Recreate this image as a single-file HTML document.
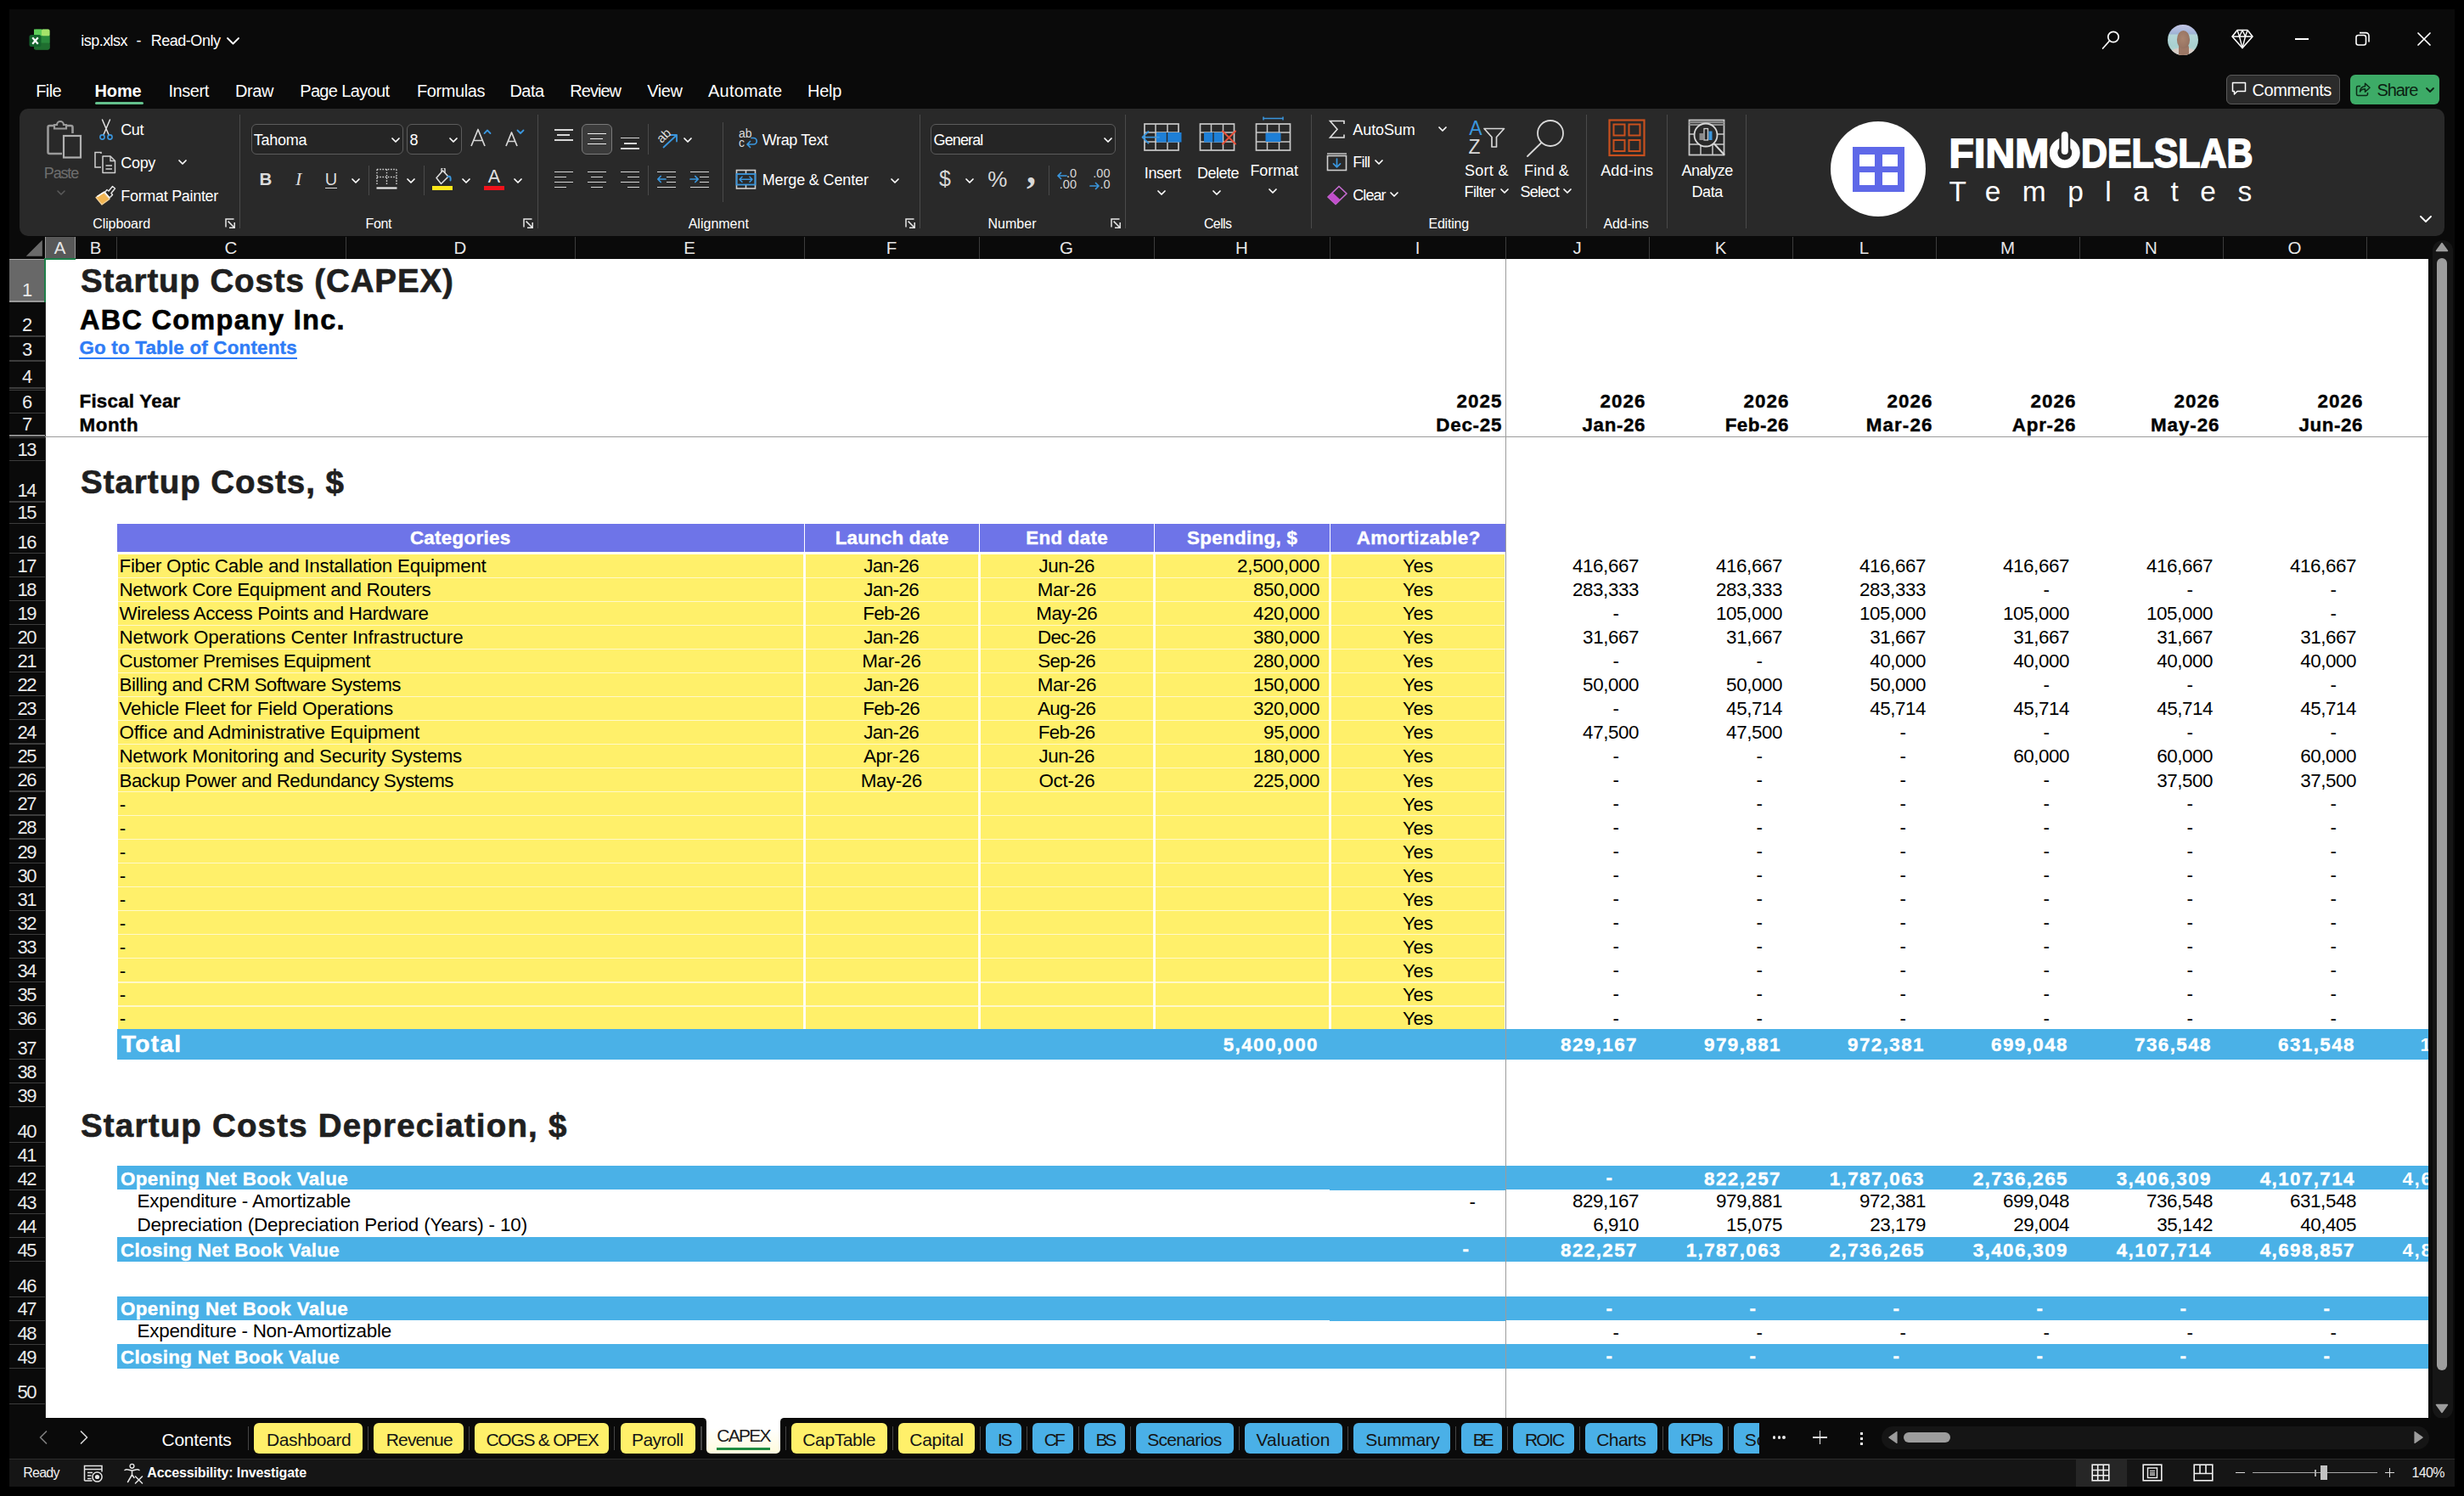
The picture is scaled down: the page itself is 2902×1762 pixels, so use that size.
<!DOCTYPE html>
<html lang="en"><head><meta charset="utf-8"><title>isp.xlsx - Excel</title>
<style>
html,body{margin:0;padding:0;background:#000;}
body{width:2902px;height:1762px;position:relative;overflow:hidden;font-family:'Liberation Sans',sans-serif;}
#app div,#app svg{position:absolute;}
#app .t{line-height:1;white-space:pre;}
#app{position:absolute;left:0;top:0;width:2902px;height:1762px;overflow:hidden;}
</style></head>
<body><div id="app">
<div style="left:11px;top:11px;width:2880px;height:1740px;background:#0a0a0a;"></div>
<svg style="left:34px;top:34px;" width="25" height="26" viewBox="0 0 25 26" fill="none">
<rect x="6" y="0.5" width="18.5" height="24" rx="2.5" fill="#2a8a3c"/>
<rect x="6" y="0.5" width="9" height="8" fill="#5fce5a"/>
<rect x="15" y="0.5" width="9.5" height="8" rx="1.5" fill="#a6e36a"/>
<rect x="6" y="8.5" width="18.5" height="8" fill="#2a8a3c"/>
<rect x="6" y="16.5" width="18.5" height="8" rx="2" fill="#1f6e2f"/>
<rect x="0.5" y="7" width="14" height="14" rx="2.5" fill="#14632c"/>
<path d="M4.2 10.2 L10.8 17.8 M10.8 10.2 L4.2 17.8" stroke="#fff" stroke-width="2.2"/>
</svg>
<div class="t" style="top:38.76px;font-size:18px;color:#fff;letter-spacing:-0.539px;left:95.3px;"><span id="t1">isp.xlsx</span></div>
<div class="t" style="top:38.76px;font-size:18px;color:#fff;left:160.5px;"><span id="t2">-</span></div>
<div class="t" style="top:38.76px;font-size:18px;color:#fff;letter-spacing:-0.472px;left:177.7px;"><span id="t3">Read-Only</span></div>
<svg style="left:265.5px;top:42.75px;" width="17" height="10.5" viewBox="0 0 17 10.5" fill="none"><path d="M2 2 L8.5 8.5 L15 2" stroke="#fff" stroke-width="1.8" stroke-linecap="round" stroke-linejoin="round"/></svg>
<div class="t" style="top:96.77px;font-size:20px;color:#fff;letter-spacing:-0.609px;left:42.2px;"><span id="t4">File</span></div>
<div class="t" style="top:96.77px;font-size:20px;color:#fff;font-weight:700;letter-spacing:-0.120px;left:111.5px;"><span id="t5">Home</span></div>
<div class="t" style="top:96.77px;font-size:20px;color:#fff;letter-spacing:-0.422px;left:198.4px;"><span id="t6">Insert</span></div>
<div class="t" style="top:96.77px;font-size:20px;color:#fff;letter-spacing:-0.418px;left:277px;"><span id="t7">Draw</span></div>
<div class="t" style="top:96.77px;font-size:20px;color:#fff;letter-spacing:-0.648px;left:353.2px;"><span id="t8">Page Layout</span></div>
<div class="t" style="top:96.77px;font-size:20px;color:#fff;letter-spacing:-0.420px;left:491px;"><span id="t9">Formulas</span></div>
<div class="t" style="top:96.77px;font-size:20px;color:#fff;letter-spacing:-0.537px;left:600.4px;"><span id="t10">Data</span></div>
<div class="t" style="top:96.77px;font-size:20px;color:#fff;letter-spacing:-0.980px;left:671.3px;"><span id="t11">Review</span></div>
<div class="t" style="top:96.77px;font-size:20px;color:#fff;letter-spacing:-0.450px;left:762.2px;"><span id="t12">View</span></div>
<div class="t" style="top:96.77px;font-size:20px;color:#fff;letter-spacing:0.211px;left:834px;"><span id="t13">Automate</span></div>
<div class="t" style="top:96.77px;font-size:20px;color:#fff;letter-spacing:-0.285px;left:951px;"><span id="t14">Help</span></div>
<div style="left:111.5px;top:119.5px;width:57.5px;height:3.5px;background:#63c08c;border-radius:2px;"></div>
<svg style="left:2472px;top:30px;" width="32" height="32" viewBox="0 0 32 32" fill="none"><circle cx="17" cy="13.5" r="6.2" stroke="#fff" stroke-width="1.7"/><path d="M12.6 18 L4.6 27" stroke="#fff" stroke-width="1.7" stroke-linecap="round"/></svg>
<div style="left:2552.9px;top:28.6px;width:36.3px;height:36.4px;border-radius:50%;overflow:hidden;background:linear-gradient(#c3c6e4 0%,#a9b8db 22%,#9fb4d4 30%,#b4d6d8 34%,#a8d0cf 70%,#c4d6d2 100%);"><div style="left:3px;top:27px;width:31px;height:14px;border-radius:50% 50% 0 0;background:#d6ccc6;"></div><div style="left:13.5px;top:24px;width:12px;height:14px;background:#9c7765;border-radius:3px;"></div><div style="left:10.8px;top:7px;width:15.6px;height:21.5px;border-radius:50% 50% 46% 46%;background:radial-gradient(ellipse at 45% 45%,#a9846f 0%,#9a7664 60%,#85655a 100%);"></div></div>
<svg style="left:2627px;top:33px;" width="28" height="26" viewBox="0 0 28 26" fill="none"><path d="M8 2.5 H20 L26 10 L14 23.5 L2 10 Z" stroke="#fff" stroke-width="1.6" stroke-linejoin="round"/><path d="M2 10 H26 M8 2.5 L10.5 10 L14 23.5 L17.5 10 L20 2.5 M10.5 10 L14 2.5 L17.5 10" stroke="#fff" stroke-width="1.4" stroke-linejoin="round"/></svg>
<div style="left:2703px;top:45px;width:16px;height:1.6px;background:#fff;"></div>
<svg style="left:2773px;top:36px;" width="20" height="20" viewBox="0 0 20 20" fill="none"><rect x="2" y="5.5" width="11.5" height="11.5" rx="2.5" stroke="#fff" stroke-width="1.6"/><path d="M6 2.6 H13.5 A3.5 3.5 0 0 1 17 6.1 V13.5" stroke="#fff" stroke-width="1.6"/></svg>
<svg style="left:2846px;top:37px;" width="18" height="18" viewBox="0 0 18 18" fill="none"><path d="M2 2 L16 16 M16 2 L2 16" stroke="#fff" stroke-width="1.7" stroke-linecap="round"/></svg>
<div style="left:2621.5px;top:87.5px;width:134px;height:35px;background:#2b2b2b;border:1px solid #5a5a5a;border-radius:6px;box-sizing:border-box;"></div>
<svg style="left:2628px;top:95px;" width="19" height="20" viewBox="0 0 19 20" fill="none"><path d="M1.5 2.5 H16.5 V12.5 H7 L3.5 16 V12.5 H1.5 Z" stroke="#fff" stroke-width="1.5" stroke-linejoin="round"/></svg>
<div class="t" style="top:95.97px;font-size:20px;color:#fff;letter-spacing:-0.425px;left:2652.6px;"><span id="t15">Comments</span></div>
<div style="left:2768px;top:87.5px;width:105px;height:35px;background:#3dab67;border-radius:6px;"></div>
<svg style="left:2773px;top:95px;" width="20" height="20" viewBox="0 0 20 20" fill="none"><path d="M7 6.5 H4 A1.5 1.5 0 0 0 2.5 8 V16 A1.5 1.5 0 0 0 4 17.5 H14 A1.5 1.5 0 0 0 15.5 16 V14" stroke="#0c2a17" stroke-width="1.5"/><path d="M6.5 13 C7 8.5 9.5 6.8 12.5 6.8 V3.2 L18 8.2 L12.5 13.2 V9.8 C10 9.8 8 10.5 6.5 13 Z" stroke="#0c2a17" stroke-width="1.5" stroke-linejoin="round"/></svg>
<div class="t" style="top:95.97px;font-size:20px;color:#0c1f12;letter-spacing:-1.135px;left:2799.6px;"><span id="t16">Share</span></div>
<svg style="left:2856px;top:102px;" width="12" height="8" viewBox="0 0 12 8" fill="none"><path d="M2 2 L6 6 L10 2" stroke="#0c1f12" stroke-width="1.8" stroke-linecap="round" stroke-linejoin="round"/></svg>
<div style="left:23px;top:128px;width:2856px;height:150px;background:#292929;border-radius:10px;"></div>
<svg style="left:54px;top:140px;" width="44" height="48" viewBox="0 0 44 48" fill="none">
<path d="M9 8 H4.5 A2 2 0 0 0 2.5 10 V39 A2 2 0 0 0 4.5 41 H19" stroke="#9a9a9a" stroke-width="2.6"/>
<path d="M24 8 H29.5 A2 2 0 0 1 31.5 10 V17" stroke="#9a9a9a" stroke-width="2.6"/>
<path d="M10 11.5 V7 H13 A4 4 0 0 1 21 7 H24 V11.5 Z" stroke="#9a9a9a" stroke-width="2.2" fill="#292929"/>
<rect x="21" y="20" width="20" height="25.5" stroke="#b0b0b0" stroke-width="2.2" fill="#292929"/>
</svg>
<div class="t" style="top:194.76px;font-size:18px;color:#6e6e6e;letter-spacing:-1.166px;left:51.8px;"><span id="t17">Paste</span></div>
<svg style="left:65.5px;top:222.5px;" width="12" height="8" viewBox="0 0 12 8" fill="none"><path d="M2 2 L6 6 L10 2" stroke="#5a5a5a" stroke-width="1.6" stroke-linecap="round" stroke-linejoin="round"/></svg>
<svg style="left:114px;top:139px;" width="22" height="28" viewBox="0 0 22 28" fill="none"><path d="M6.5 2 L14.2 20 M15.5 2 L7.8 20" stroke="#e0e0e0" stroke-width="1.5" stroke-linecap="round"/>
<circle cx="6.5" cy="22.5" r="2.6" stroke="#3a96dd" stroke-width="1.6"/><circle cx="15.5" cy="22.5" r="2.6" stroke="#3a96dd" stroke-width="1.6"/></svg>
<div class="t" style="top:143.76px;font-size:18px;color:#ffffff;letter-spacing:-0.439px;left:142.3px;"><span id="t18">Cut</span></div>
<svg style="left:110px;top:178px;" width="28" height="28" viewBox="0 0 28 28" fill="none"><path d="M9 3 V1.5 H2 V19 H9" stroke="#d0d0d0" stroke-width="1.5"/>
<path d="M11 6 H20 L25.5 11.5 V25.5 H11 Z" stroke="#d0d0d0" stroke-width="1.5" stroke-linejoin="round"/>
<path d="M20 6 V11.5 H25.5 M14.5 17 H22 M14.5 21 H22" stroke="#d0d0d0" stroke-width="1.4"/></svg>
<div class="t" style="top:182.56px;font-size:18px;color:#ffffff;letter-spacing:-0.333px;left:142.3px;"><span id="t19">Copy</span></div>
<svg style="left:209px;top:187px;" width="12" height="8" viewBox="0 0 12 8" fill="none"><path d="M2 2 L6 6 L10 2" stroke="#ffffff" stroke-width="1.7" stroke-linecap="round" stroke-linejoin="round"/></svg>
<svg style="left:111px;top:217px;" width="26" height="26" viewBox="0 0 26 26" fill="none"><path d="M2 15.5 L11 9.5 L18 17.5 L9 24 Z" fill="#f2b552" stroke="#f2d29b" stroke-width="1.2" stroke-linejoin="round"/>
<path d="M3.5 14.5 L12 9 L18.5 16.5" stroke="#fff" stroke-width="1.5" fill="none"/>
<path d="M12.5 9.5 L15 6.5 L17 8 L21.5 2.5 L24.5 5 L20 10.5 L21.5 12.5 L18.5 15.5" stroke="#e6e6e6" stroke-width="1.5" stroke-linejoin="round"/></svg>
<div class="t" style="top:221.56px;font-size:18px;color:#ffffff;letter-spacing:-0.310px;left:142.3px;"><span id="t20">Format Painter</span></div>
<div class="t" style="top:255.86px;font-size:16px;color:#ffffff;letter-spacing:-0.076px;left:109.2px;"><span id="t21">Clipboard</span></div>
<svg style="left:265px;top:257px;" width="13" height="13" viewBox="0 0 13 13" fill="none"><path d="M1 10.5 V1 H10.5 M3.6 3.6 L11 11 M11.2 5 V11.2 H5" stroke="#e6e6e6" stroke-width="1.5"/></svg>
<div style="left:281.8px;top:135px;width:1.3px;height:134px;background:#4a4a4a;"></div>
<div style="left:295.5px;top:146.3px;width:179.9px;height:35.5px;background:#252525;border:1px solid #5c5c5c;border-radius:6px;box-sizing:border-box;"></div>
<div class="t" style="top:155.56px;font-size:18px;color:#ffffff;letter-spacing:-0.258px;left:298.8px;"><span id="t22">Tahoma</span></div>
<svg style="left:459.9px;top:161px;" width="12" height="8" viewBox="0 0 12 8" fill="none"><path d="M2 2 L6 6 L10 2" stroke="#ffffff" stroke-width="1.7" stroke-linecap="round" stroke-linejoin="round"/></svg>
<div style="left:479.3px;top:146.3px;width:64.5px;height:35.5px;background:#252525;border:1px solid #5c5c5c;border-radius:6px;box-sizing:border-box;"></div>
<div class="t" style="top:155.56px;font-size:18px;color:#ffffff;left:482.6px;"><span id="t23">8</span></div>
<svg style="left:528.3px;top:161px;" width="12" height="8" viewBox="0 0 12 8" fill="none"><path d="M2 2 L6 6 L10 2" stroke="#ffffff" stroke-width="1.7" stroke-linecap="round" stroke-linejoin="round"/></svg>
<svg style="left:552px;top:148px;" width="28" height="28" viewBox="0 0 28 28" fill="none"><path d="M3 24 L11 4.5 L19 24 M5.8 17.5 H16.2" stroke="#d8d8d8" stroke-width="1.7" stroke-linejoin="round"/><path d="M18.5 9 L22 5.5 L25.5 9" stroke="#3a96dd" stroke-width="1.8" stroke-linecap="round" stroke-linejoin="round"/></svg>
<svg style="left:593px;top:148px;" width="28" height="28" viewBox="0 0 28 28" fill="none"><path d="M3 24 L9.5 8 L16 24 M5.2 18.5 H13.8" stroke="#d8d8d8" stroke-width="1.7" stroke-linejoin="round"/><path d="M16.5 5.5 L20 9 L23.5 5.5" stroke="#3a96dd" stroke-width="1.8" stroke-linecap="round" stroke-linejoin="round"/></svg>
<div class="t" style="top:200.65px;font-size:20.5px;color:#dcdcdc;font-weight:700;left:-287px;width:1200px;text-align:center;"><span id="t24">B</span></div>
<div class="t" style="top:199.88px;font-size:22px;color:#dcdcdc;left:-248.4px;width:1200px;text-align:center;font-style:italic;font-family:'Liberation Serif',serif;"><span id="t25">I</span></div>
<div class="t" style="top:200.57px;font-size:20px;color:#dcdcdc;left:-210px;width:1200px;text-align:center;"><span id="t26">U</span></div>
<div style="left:383px;top:220.5px;width:14px;height:1.5px;background:#dcdcdc;"></div>
<svg style="left:412.9px;top:208.5px;" width="12" height="8" viewBox="0 0 12 8" fill="none"><path d="M2 2 L6 6 L10 2" stroke="#ffffff" stroke-width="1.7" stroke-linecap="round" stroke-linejoin="round"/></svg>
<div style="left:434.1px;top:194.5px;width:1.3px;height:35.1px;background:#4a4a4a;"></div>
<svg style="left:443px;top:198px;" width="25" height="26" viewBox="0 0 25 26" fill="none"><path d="M1 1.5 H24 M1 1.5 V19.5 M24 1.5 V19.5 M12.5 1.5 V19.5 M1 10.5 H24" stroke="#d0d0d0" stroke-width="1.4" stroke-dasharray="1.6 1.6"/>
<path d="M0.5 23.5 H24.5" stroke="#e8e8e8" stroke-width="2.2"/></svg>
<svg style="left:478px;top:208.5px;" width="12" height="8" viewBox="0 0 12 8" fill="none"><path d="M2 2 L6 6 L10 2" stroke="#ffffff" stroke-width="1.7" stroke-linecap="round" stroke-linejoin="round"/></svg>
<div style="left:499px;top:194.5px;width:1.3px;height:35.1px;background:#4a4a4a;"></div>
<svg style="left:508px;top:198px;" width="26" height="26" viewBox="0 0 26 26" fill="none"><path d="M6 11.5 L13.5 3 L20 10 L11.5 18.5 Z" stroke="#e0e0e0" stroke-width="1.5" stroke-linejoin="round"/>
<path d="M12 4.5 V1.5 A2 2 0 0 1 16 1.5 V6" stroke="#e0e0e0" stroke-width="1.4"/>
<path d="M19.5 10 C22.5 8.5 23 12 22.5 14.5" stroke="#3a96dd" stroke-width="2" stroke-linecap="round"/></svg>
<div style="left:508.7px;top:218.6px;width:24px;height:5.2px;background:#ffe81a;"></div>
<svg style="left:542.8px;top:208.5px;" width="12" height="8" viewBox="0 0 12 8" fill="none"><path d="M2 2 L6 6 L10 2" stroke="#ffffff" stroke-width="1.7" stroke-linecap="round" stroke-linejoin="round"/></svg>
<div class="t" style="top:198.30px;font-size:21.5px;color:#e0e0e0;left:-18px;width:1200px;text-align:center;"><span id="t27">A</span></div>
<div style="left:570px;top:218.6px;width:24px;height:5.2px;background:#f1121b;"></div>
<svg style="left:604px;top:208.5px;" width="12" height="8" viewBox="0 0 12 8" fill="none"><path d="M2 2 L6 6 L10 2" stroke="#ffffff" stroke-width="1.7" stroke-linecap="round" stroke-linejoin="round"/></svg>
<div class="t" style="top:255.86px;font-size:16px;color:#ffffff;letter-spacing:-0.379px;left:430.5px;"><span id="t28">Font</span></div>
<svg style="left:615.7px;top:257px;" width="13" height="13" viewBox="0 0 13 13" fill="none"><path d="M1 10.5 V1 H10.5 M3.6 3.6 L11 11 M11.2 5 V11.2 H5" stroke="#e6e6e6" stroke-width="1.5"/></svg>
<div style="left:633.1px;top:135px;width:1.3px;height:134px;background:#4a4a4a;"></div>
<div style="left:652.9px;top:152.1px;width:22px;height:1.6px;background:#d6d6d6;"></div>
<div style="left:656.4px;top:158.2px;width:15px;height:1.6px;background:#d6d6d6;"></div>
<div style="left:652.9px;top:164.2px;width:22px;height:1.6px;background:#d6d6d6;"></div>
<div style="left:685px;top:146.3px;width:36px;height:35.5px;background:#3b3b3b;border:1px solid #7a7a7a;border-radius:6px;box-sizing:border-box;"></div>
<div style="left:691.9px;top:156.5px;width:22px;height:1.6px;background:#f0f0f0;"></div>
<div style="left:695.4px;top:162.6px;width:15px;height:1.6px;background:#f0f0f0;"></div>
<div style="left:691.9px;top:168.6px;width:22px;height:1.6px;background:#f0f0f0;"></div>
<div style="left:731px;top:161.9px;width:22px;height:1.6px;background:#d6d6d6;"></div>
<div style="left:734.5px;top:168.2px;width:15px;height:1.6px;background:#d6d6d6;"></div>
<div style="left:731px;top:174.2px;width:22px;height:1.6px;background:#d6d6d6;"></div>
<div style="left:763px;top:146px;width:1.3px;height:36px;background:#4a4a4a;"></div>
<svg style="left:771px;top:149px;" width="30" height="30" viewBox="0 0 30 30" fill="none"><path d="M10.5 24.5 L25.5 10.5 M18.5 10 H26 V17.5" stroke="#3a96dd" stroke-width="1.8" stroke-linecap="round" stroke-linejoin="round"/></svg>
<div class="t" style="left:773px;top:152px;font-size:15px;color:#dcdcdc;transform:rotate(-45deg);transform-origin:50% 50%;">ab</div>
<svg style="left:804px;top:161px;" width="12" height="8" viewBox="0 0 12 8" fill="none"><path d="M2 2 L6 6 L10 2" stroke="#ffffff" stroke-width="1.7" stroke-linecap="round" stroke-linejoin="round"/></svg>
<div style="left:850.7px;top:144px;width:1.3px;height:94px;background:#4a4a4a;"></div>
<div class="t" style="top:149.65px;font-size:14px;color:#dcdcdc;left:870px;"><span id="t29">ab</span></div>
<div class="t" style="top:160.65px;font-size:14px;color:#dcdcdc;left:870px;"><span id="t30">c</span></div>
<svg style="left:877px;top:160px;" width="16" height="16" viewBox="0 0 16 16" fill="none"><path d="M8 2.5 H10.5 A3.5 3.5 0 0 1 10.5 10 H3.5 M6.5 6.5 L3 10 L6.5 13.5" stroke="#3a96dd" stroke-width="1.7" stroke-linecap="round" stroke-linejoin="round"/></svg>
<div class="t" style="top:155.56px;font-size:18px;color:#ffffff;letter-spacing:-0.342px;left:897.7px;"><span id="t31">Wrap Text</span></div>
<div style="left:652.9px;top:201.6px;width:22px;height:1.6px;background:#d6d6d6;"></div>
<div style="left:652.9px;top:207.5px;width:14px;height:1.6px;background:#d6d6d6;"></div>
<div style="left:652.9px;top:213.5px;width:22px;height:1.6px;background:#d6d6d6;"></div>
<div style="left:652.9px;top:219.6px;width:14px;height:1.6px;background:#d6d6d6;"></div>
<div style="left:691.9px;top:201.6px;width:22px;height:1.6px;background:#d6d6d6;"></div>
<div style="left:695.9px;top:207.5px;width:14px;height:1.6px;background:#d6d6d6;"></div>
<div style="left:691.9px;top:213.5px;width:22px;height:1.6px;background:#d6d6d6;"></div>
<div style="left:695.9px;top:219.6px;width:14px;height:1.6px;background:#d6d6d6;"></div>
<div style="left:731px;top:201.6px;width:22px;height:1.6px;background:#d6d6d6;"></div>
<div style="left:739px;top:207.5px;width:14px;height:1.6px;background:#d6d6d6;"></div>
<div style="left:731px;top:213.5px;width:22px;height:1.6px;background:#d6d6d6;"></div>
<div style="left:739px;top:219.6px;width:14px;height:1.6px;background:#d6d6d6;"></div>
<div style="left:763px;top:194.5px;width:1.3px;height:35.1px;background:#4a4a4a;"></div>
<div style="left:774px;top:201.6px;width:22px;height:1.6px;background:#d6d6d6;"></div>
<div style="left:785px;top:207.5px;width:11px;height:1.6px;background:#d6d6d6;"></div>
<div style="left:785px;top:213.5px;width:11px;height:1.6px;background:#d6d6d6;"></div>
<div style="left:774px;top:219.6px;width:22px;height:1.6px;background:#d6d6d6;"></div>
<svg style="left:773px;top:205px;" width="12" height="12" viewBox="0 0 12 12" fill="none"><path d="M11 6 H2 M5.2 2.5 L1.8 6 L5.2 9.5" stroke="#3a96dd" stroke-width="1.7" stroke-linecap="round" stroke-linejoin="round"/></svg>
<div style="left:812.8px;top:201.6px;width:22px;height:1.6px;background:#d6d6d6;"></div>
<div style="left:823.8px;top:207.5px;width:11px;height:1.6px;background:#d6d6d6;"></div>
<div style="left:823.8px;top:213.5px;width:11px;height:1.6px;background:#d6d6d6;"></div>
<div style="left:812.8px;top:219.6px;width:22px;height:1.6px;background:#d6d6d6;"></div>
<svg style="left:812px;top:205px;" width="12" height="12" viewBox="0 0 12 12" fill="none"><path d="M1 6 H10 M6.8 2.5 L10.2 6 L6.8 9.5" stroke="#3a96dd" stroke-width="1.7" stroke-linecap="round" stroke-linejoin="round"/></svg>
<svg style="left:866px;top:199px;" width="26" height="25" viewBox="0 0 26 25" fill="none"><rect x="1.5" y="1.5" width="22" height="21.5" stroke="#cfcfcf" stroke-width="1.6"/>
<path d="M12.5 1.5 V6 M12.5 18.5 V23" stroke="#cfcfcf" stroke-width="1.6"/>
<rect x="1.5" y="6" width="22" height="12.5" stroke="#3a96dd" stroke-width="1.8"/>
<path d="M5 12.2 H20 M8 9.2 L5 12.2 L8 15.2 M17 9.2 L20 12.2 L17 15.2" stroke="#3a96dd" stroke-width="1.6" stroke-linecap="round" stroke-linejoin="round"/></svg>
<div class="t" style="top:203.36px;font-size:18px;color:#ffffff;letter-spacing:-0.140px;left:897.7px;"><span id="t32">Merge &amp; Center</span></div>
<svg style="left:1048.4px;top:208.5px;" width="12" height="8" viewBox="0 0 12 8" fill="none"><path d="M2 2 L6 6 L10 2" stroke="#ffffff" stroke-width="1.7" stroke-linecap="round" stroke-linejoin="round"/></svg>
<div class="t" style="top:255.86px;font-size:16px;color:#ffffff;letter-spacing:0.005px;left:810.7px;"><span id="t33">Alignment</span></div>
<svg style="left:1066px;top:257px;" width="13" height="13" viewBox="0 0 13 13" fill="none"><path d="M1 10.5 V1 H10.5 M3.6 3.6 L11 11 M11.2 5 V11.2 H5" stroke="#e6e6e6" stroke-width="1.5"/></svg>
<div style="left:1082.9px;top:135px;width:1.3px;height:134px;background:#4a4a4a;"></div>
<div style="left:1096.2px;top:146.3px;width:217.6px;height:35.5px;background:#252525;border:1px solid #5c5c5c;border-radius:6px;box-sizing:border-box;"></div>
<div class="t" style="top:155.56px;font-size:18px;color:#ffffff;letter-spacing:-0.864px;left:1099.5px;"><span id="t34">General</span></div>
<svg style="left:1299px;top:161px;" width="12" height="8" viewBox="0 0 12 8" fill="none"><path d="M2 2 L6 6 L10 2" stroke="#ffffff" stroke-width="1.7" stroke-linecap="round" stroke-linejoin="round"/></svg>
<div class="t" style="top:198.34px;font-size:25px;color:#d8d8d8;left:513px;width:1200px;text-align:center;"><span id="t35">$</span></div>
<svg style="left:1136.2px;top:208.5px;" width="12" height="8" viewBox="0 0 12 8" fill="none"><path d="M2 2 L6 6 L10 2" stroke="#ffffff" stroke-width="1.7" stroke-linecap="round" stroke-linejoin="round"/></svg>
<div class="t" style="top:197.99px;font-size:26px;color:#d8d8d8;left:574.8px;width:1200px;text-align:center;"><span id="t36">%</span></div>
<div class="t" style="top:179.75px;font-size:44px;color:#d8d8d8;font-weight:700;left:614.5px;width:1200px;text-align:center;font-family:'Liberation Serif',serif;"><span id="t37">,</span></div>
<div style="left:1234.8px;top:194.5px;width:1.3px;height:35.1px;background:#4a4a4a;"></div>
<div class="t" style="top:197.23px;font-size:14.5px;color:#d8d8d8;left:68px;width:1200px;text-align:right;"><span id="t38">.0</span></div>
<div class="t" style="top:210.23px;font-size:14.5px;color:#d8d8d8;left:68px;width:1200px;text-align:right;"><span id="t39">.00</span></div>
<svg style="left:1244px;top:201px;" width="13" height="12" viewBox="0 0 13 12" fill="none"><path d="M12 6 H2 M5.5 2.5 L2 6 L5.5 9.5" stroke="#3a96dd" stroke-width="1.7" stroke-linecap="round" stroke-linejoin="round"/></svg>
<div class="t" style="top:197.23px;font-size:14.5px;color:#d8d8d8;left:107.5px;width:1200px;text-align:right;"><span id="t40">.00</span></div>
<div class="t" style="top:210.23px;font-size:14.5px;color:#d8d8d8;left:107.5px;width:1200px;text-align:right;"><span id="t41">.0</span></div>
<svg style="left:1283px;top:213px;" width="13" height="12" viewBox="0 0 13 12" fill="none"><path d="M1 6 H11 M7.5 2.5 L11 6 L7.5 9.5" stroke="#3a96dd" stroke-width="1.7" stroke-linecap="round" stroke-linejoin="round"/></svg>
<div class="t" style="top:255.86px;font-size:16px;color:#ffffff;letter-spacing:0.049px;left:1163.4px;"><span id="t42">Number</span></div>
<svg style="left:1308px;top:257px;" width="13" height="13" viewBox="0 0 13 13" fill="none"><path d="M1 10.5 V1 H10.5 M3.6 3.6 L11 11 M11.2 5 V11.2 H5" stroke="#e6e6e6" stroke-width="1.5"/></svg>
<div style="left:1325.1px;top:135px;width:1.3px;height:134px;background:#4a4a4a;"></div>
<svg style="left:1343px;top:145px;" width="52" height="35" viewBox="0 0 52 35" fill="none"><g transform="translate(4 0)"><rect x="1" y="1" width="40" height="31" stroke="#c8c8c8" stroke-width="1.7"/><path d="M14.0 1 V32 M28.0 1 V32 M1 11.0 H41 M1 22.0 H41" stroke="#c8c8c8" stroke-width="1.5"/></g><rect x="19" y="11" width="29.5" height="11.5" fill="#1e7fd6"/><path d="M31.5 11 V22.5" stroke="#292929" stroke-width="1.4"/><path d="M22 16.7 H3 M9.5 10 L2.5 16.7 L9.5 23.5" stroke="#3a96dd" stroke-width="1.8" stroke-linecap="round" stroke-linejoin="round"/></svg>
<div class="t" style="top:194.66px;font-size:18px;color:#ffffff;letter-spacing:-0.289px;left:1347.7px;"><span id="t43">Insert</span></div>
<svg style="left:1362.4px;top:222.7px;" width="12" height="8" viewBox="0 0 12 8" fill="none"><path d="M2 2 L6 6 L10 2" stroke="#ffffff" stroke-width="1.7" stroke-linecap="round" stroke-linejoin="round"/></svg>
<svg style="left:1411px;top:145px;" width="50" height="35" viewBox="0 0 50 35" fill="none"><g transform="translate(1.5 0)"><rect x="1" y="1" width="40" height="31" stroke="#c8c8c8" stroke-width="1.7"/><path d="M14.0 1 V32 M28.0 1 V32 M1 11.0 H41 M1 22.0 H41" stroke="#c8c8c8" stroke-width="1.5"/></g><rect x="7" y="11" width="22" height="11.5" fill="#1e7fd6"/><path d="M18 11 V22.5" stroke="#292929" stroke-width="1.4"/><path d="M29 9.5 L44 24.5 M44 9.5 L29 24.5" stroke="#e8503a" stroke-width="2" stroke-linecap="round"/></svg>
<div class="t" style="top:194.66px;font-size:18px;color:#ffffff;letter-spacing:-0.522px;left:1410px;"><span id="t44">Delete</span></div>
<svg style="left:1427.2px;top:222.7px;" width="12" height="8" viewBox="0 0 12 8" fill="none"><path d="M2 2 L6 6 L10 2" stroke="#ffffff" stroke-width="1.7" stroke-linecap="round" stroke-linejoin="round"/></svg>
<svg style="left:1478px;top:137px;" width="45" height="43" viewBox="0 0 45 43" fill="none"><g transform="translate(0.5 8)"><rect x="1" y="1" width="40" height="31" stroke="#c8c8c8" stroke-width="1.7"/><path d="M14.0 1 V32 M28.0 1 V32 M1 11.0 H41 M1 22.0 H41" stroke="#c8c8c8" stroke-width="1.5"/></g><rect x="12.5" y="19.5" width="18" height="10.5" fill="#1e7fd6"/><path d="M10 2.5 H33 M10 0.5 V4.5 M33 0.5 V4.5" stroke="#3a96dd" stroke-width="1.5"/></svg>
<div class="t" style="top:192.46px;font-size:18px;color:#ffffff;letter-spacing:-0.069px;left:1472.4px;"><span id="t45">Format</span></div>
<svg style="left:1493.4px;top:220.8px;" width="12" height="8" viewBox="0 0 12 8" fill="none"><path d="M2 2 L6 6 L10 2" stroke="#ffffff" stroke-width="1.7" stroke-linecap="round" stroke-linejoin="round"/></svg>
<div class="t" style="top:255.86px;font-size:16px;color:#ffffff;letter-spacing:-0.593px;left:1417.9px;"><span id="t46">Cells</span></div>
<div style="left:1543.9px;top:135px;width:1.3px;height:134px;background:#4a4a4a;"></div>
<svg style="left:1564px;top:141px;" width="22" height="23" viewBox="0 0 22 23" fill="none"><path d="M19 5 V1.5 H2.5 L11 11.2 L2.5 21 H19 V17.5" stroke="#e0e0e0" stroke-width="1.6" stroke-linejoin="miter"/></svg>
<div class="t" style="top:143.76px;font-size:18px;color:#ffffff;letter-spacing:-0.092px;left:1593.3px;"><span id="t47">AutoSum</span></div>
<svg style="left:1692.9px;top:148.4px;" width="12" height="8" viewBox="0 0 12 8" fill="none"><path d="M2 2 L6 6 L10 2" stroke="#ffffff" stroke-width="1.7" stroke-linecap="round" stroke-linejoin="round"/></svg>
<svg style="left:1562px;top:180px;" width="26" height="22" viewBox="0 0 26 22" fill="none"><rect x="1.5" y="3.5" width="22" height="17" stroke="#d0d0d0" stroke-width="1.6"/><path d="M1 1 H24" stroke="#d0d0d0" stroke-width="1.4"/><path d="M12.5 7 V16.5 M8.5 12.8 L12.5 16.8 L16.5 12.8" stroke="#3a96dd" stroke-width="1.7" stroke-linecap="round" stroke-linejoin="round"/></svg>
<div class="t" style="top:182.16px;font-size:18px;color:#ffffff;letter-spacing:-0.725px;left:1593.3px;"><span id="t48">Fill</span></div>
<svg style="left:1618.4px;top:186.6px;" width="12" height="8" viewBox="0 0 12 8" fill="none"><path d="M2 2 L6 6 L10 2" stroke="#ffffff" stroke-width="1.7" stroke-linecap="round" stroke-linejoin="round"/></svg>
<svg style="left:1562px;top:218px;" width="26" height="24" viewBox="0 0 26 24" fill="none"><path d="M2 14 L15 1.5 L24 10 L11 22.5 Z" stroke="#c66bd0" stroke-width="1.7" stroke-linejoin="round"/><path d="M2 14 L7.5 8.8 L16.5 17.3 L11 22.5 Z" fill="#c04ecb"/></svg>
<div class="t" style="top:220.96px;font-size:18px;color:#ffffff;letter-spacing:-0.943px;left:1593.3px;"><span id="t49">Clear</span></div>
<svg style="left:1636.3px;top:225px;" width="12" height="8" viewBox="0 0 12 8" fill="none"><path d="M2 2 L6 6 L10 2" stroke="#ffffff" stroke-width="1.7" stroke-linecap="round" stroke-linejoin="round"/></svg>
<div class="t" style="top:140.03px;font-size:23px;color:#3a96dd;left:1138px;width:1200px;text-align:center;"><span id="t50">A</span></div>
<div class="t" style="top:161.53px;font-size:23px;color:#d8d8d8;left:1136.5px;width:1200px;text-align:center;"><span id="t51">Z</span></div>
<svg style="left:1746px;top:149px;" width="28" height="28" viewBox="0 0 28 28" fill="none"><path d="M2 2.5 H25.5 L16.5 12.5 V24 H11 V12.5 Z" stroke="#d8d8d8" stroke-width="1.7" stroke-linejoin="round"/></svg>
<div class="t" style="top:192.46px;font-size:18px;color:#ffffff;letter-spacing:0.278px;left:1725px;"><span id="t52">Sort &amp;</span></div>
<div class="t" style="top:216.56px;font-size:18px;color:#ffffff;letter-spacing:-0.583px;left:1724.5px;"><span id="t53">Filter</span></div>
<svg style="left:1765.9px;top:221px;" width="12" height="8" viewBox="0 0 12 8" fill="none"><path d="M2 2 L6 6 L10 2" stroke="#ffffff" stroke-width="1.7" stroke-linecap="round" stroke-linejoin="round"/></svg>
<svg style="left:1796px;top:139px;" width="48" height="48" viewBox="0 0 48 48" fill="none"><circle cx="30" cy="18" r="15" stroke="#d8d8d8" stroke-width="1.8"/><path d="M19.5 29 L3 45" stroke="#d8d8d8" stroke-width="1.8" stroke-linecap="round"/></svg>
<div class="t" style="top:192.46px;font-size:18px;color:#ffffff;letter-spacing:0.161px;left:1795px;"><span id="t54">Find &amp;</span></div>
<div class="t" style="top:216.56px;font-size:18px;color:#ffffff;letter-spacing:-0.772px;left:1790.5px;"><span id="t55">Select</span></div>
<svg style="left:1840.4px;top:221px;" width="12" height="8" viewBox="0 0 12 8" fill="none"><path d="M2 2 L6 6 L10 2" stroke="#ffffff" stroke-width="1.7" stroke-linecap="round" stroke-linejoin="round"/></svg>
<div class="t" style="top:255.86px;font-size:16px;color:#ffffff;letter-spacing:-0.232px;left:1682.5px;"><span id="t56">Editing</span></div>
<div style="left:1867.8px;top:135px;width:1.3px;height:134px;background:#4a4a4a;"></div>
<svg style="left:1894px;top:140px;" width="44" height="45" viewBox="0 0 44 45" fill="none"><rect x="1.5" y="1.5" width="41" height="41.5" stroke="#c8501e" stroke-width="2.2"/>
<rect x="6.5" y="6.5" width="13" height="13" stroke="#c8501e" stroke-width="2"/><rect x="24.5" y="6.5" width="13" height="13" stroke="#c8501e" stroke-width="2"/>
<rect x="6.5" y="25" width="13" height="13" stroke="#c8501e" stroke-width="2"/><rect x="24.5" y="25" width="13" height="13" stroke="#c8501e" stroke-width="2"/></svg>
<div class="t" style="top:192.46px;font-size:18px;color:#ffffff;letter-spacing:0.138px;left:1885.2px;"><span id="t57">Add-ins</span></div>
<div class="t" style="top:255.86px;font-size:16px;color:#ffffff;letter-spacing:-0.179px;left:1888.5px;"><span id="t58">Add-ins</span></div>
<div style="left:1962.9px;top:135px;width:1.3px;height:134px;background:#4a4a4a;"></div>
<svg style="left:1988px;top:140px;" width="45" height="45" viewBox="0 0 45 45" fill="none"><rect x="1.5" y="1.5" width="41" height="41" stroke="#c8c8c8" stroke-width="1.8"/>
<path d="M1.5 7 H42.5 M1.5 4.2 H42.5" stroke="#8a8a8a" stroke-width="2.2"/>
<path d="M1.5 18 H42.5 M1.5 30 H42.5 M15 30 V42 M29 30 V42" stroke="#c8c8c8" stroke-width="1.5"/>
<circle cx="21" cy="19" r="13.5" fill="#292929" stroke="#d8d8d8" stroke-width="1.8"/>
<rect x="13.5" y="17" width="4.5" height="8" fill="#8a8a8a"/><rect x="19" y="11.5" width="4.5" height="13.5" stroke="#d0d0d0" stroke-width="1.3"/><rect x="24.5" y="14.5" width="4" height="10.5" fill="#3a96dd"/>
<path d="M31 29.5 L43 42.5" stroke="#d8d8d8" stroke-width="2"/></svg>
<div class="t" style="top:192.46px;font-size:18px;color:#ffffff;letter-spacing:-0.535px;left:1980.5px;"><span id="t59">Analyze</span></div>
<div class="t" style="top:216.56px;font-size:18px;color:#ffffff;letter-spacing:-0.483px;left:1992.6px;"><span id="t60">Data</span></div>
<div style="left:2056px;top:135px;width:1.3px;height:134px;background:#4a4a4a;"></div>
<div style="left:2156px;top:142.7px;width:112.4px;height:112.4px;background:#fff;border-radius:50%;"></div>
<div style="left:2181.7px;top:172.7px;width:61px;height:53.3px;background:#5e68e8;"></div>
<div style="left:2190px;top:181.7px;width:18.3px;height:14.3px;background:#fff;"></div>
<div style="left:2190px;top:203.4px;width:18.3px;height:14.3px;background:#fff;"></div>
<div style="left:2216.8px;top:181.7px;width:18.3px;height:14.3px;background:#fff;"></div>
<div style="left:2216.8px;top:203.4px;width:18.3px;height:14.3px;background:#fff;"></div>
<div class="t" style="top:156.97px;font-size:48px;color:#fff;font-weight:700;letter-spacing:0.172px;left:2295.4px;-webkit-text-stroke:1.8px #fff;"><span id="t61">FINM</span></div>
<svg style="left:2410px;top:150px;" width="44" height="52" viewBox="0 0 44 52" fill="none"><circle cx="21.8" cy="30" r="13.2" stroke="#fff" stroke-width="9.5" fill="none"/><rect x="15.3" y="3" width="13" height="31.5" rx="6" fill="#292929"/><rect x="17.8" y="5" width="8" height="27" rx="4" fill="#fff"/></svg>
<div class="t" style="top:156.97px;font-size:48px;color:#fff;font-weight:700;left:2450.5px;-webkit-text-stroke:1.8px #fff;transform:scaleX(0.893);transform-origin:0 0;"><span id="t62">DELSLAB</span></div>
<div class="t" style="top:208.74px;font-size:33.5px;color:#fff;letter-spacing:25.513px;left:2295.4px;"><span id="t63">Templates</span></div>
<svg style="left:2849px;top:252.5px;" width="16" height="10" viewBox="0 0 16 10" fill="none"><path d="M2 2 L8 8 L14 2" stroke="#fff" stroke-width="1.8" stroke-linecap="round" stroke-linejoin="round"/></svg>
<div style="left:53px;top:305px;width:2807px;height:1365px;background:#fff;"></div>
<div style="left:11px;top:278px;width:2849px;height:27px;background:#0a0a0a;"></div>
<div style="left:53px;top:278.5px;width:35px;height:26px;background:#585858;"></div>
<div class="t" style="top:281.85px;font-size:20.5px;color:#e6e6e6;left:-529.5px;width:1200px;text-align:center;"><span id="t64">A</span></div>
<div style="left:87.5px;top:279px;width:1.2px;height:26px;background:#3c3c3c;"></div>
<div class="t" style="top:281.85px;font-size:20.5px;color:#e6e6e6;left:-487.5px;width:1200px;text-align:center;"><span id="t65">B</span></div>
<div style="left:136.5px;top:279px;width:1.2px;height:26px;background:#3c3c3c;"></div>
<div class="t" style="top:281.85px;font-size:20.5px;color:#e6e6e6;left:-328px;width:1200px;text-align:center;"><span id="t66">C</span></div>
<div style="left:406.5px;top:279px;width:1.2px;height:26px;background:#3c3c3c;"></div>
<div class="t" style="top:281.85px;font-size:20.5px;color:#e6e6e6;left:-58px;width:1200px;text-align:center;"><span id="t67">D</span></div>
<div style="left:676.5px;top:279px;width:1.2px;height:26px;background:#3c3c3c;"></div>
<div class="t" style="top:281.85px;font-size:20.5px;color:#e6e6e6;left:212px;width:1200px;text-align:center;"><span id="t68">E</span></div>
<div style="left:946.5px;top:279px;width:1.2px;height:26px;background:#3c3c3c;"></div>
<div class="t" style="top:281.85px;font-size:20.5px;color:#e6e6e6;left:450px;width:1200px;text-align:center;"><span id="t69">F</span></div>
<div style="left:1152.5px;top:279px;width:1.2px;height:26px;background:#3c3c3c;"></div>
<div class="t" style="top:281.85px;font-size:20.5px;color:#e6e6e6;left:656px;width:1200px;text-align:center;"><span id="t70">G</span></div>
<div style="left:1358.5px;top:279px;width:1.2px;height:26px;background:#3c3c3c;"></div>
<div class="t" style="top:281.85px;font-size:20.5px;color:#e6e6e6;left:862.5px;width:1200px;text-align:center;"><span id="t71">H</span></div>
<div style="left:1565.5px;top:279px;width:1.2px;height:26px;background:#3c3c3c;"></div>
<div class="t" style="top:281.85px;font-size:20.5px;color:#e6e6e6;left:1069.5px;width:1200px;text-align:center;"><span id="t72">I</span></div>
<div style="left:1772.5px;top:279px;width:1.2px;height:26px;background:#3c3c3c;"></div>
<div class="t" style="top:281.85px;font-size:20.5px;color:#e6e6e6;left:1257.5px;width:1200px;text-align:center;"><span id="t73">J</span></div>
<div style="left:1941.5px;top:279px;width:1.2px;height:26px;background:#3c3c3c;"></div>
<div class="t" style="top:281.85px;font-size:20.5px;color:#e6e6e6;left:1426.5px;width:1200px;text-align:center;"><span id="t74">K</span></div>
<div style="left:2110.5px;top:279px;width:1.2px;height:26px;background:#3c3c3c;"></div>
<div class="t" style="top:281.85px;font-size:20.5px;color:#e6e6e6;left:1595.5px;width:1200px;text-align:center;"><span id="t75">L</span></div>
<div style="left:2279.5px;top:279px;width:1.2px;height:26px;background:#3c3c3c;"></div>
<div class="t" style="top:281.85px;font-size:20.5px;color:#e6e6e6;left:1764.5px;width:1200px;text-align:center;"><span id="t76">M</span></div>
<div style="left:2448.5px;top:279px;width:1.2px;height:26px;background:#3c3c3c;"></div>
<div class="t" style="top:281.85px;font-size:20.5px;color:#e6e6e6;left:1933.5px;width:1200px;text-align:center;"><span id="t77">N</span></div>
<div style="left:2617.5px;top:279px;width:1.2px;height:26px;background:#3c3c3c;"></div>
<div class="t" style="top:281.85px;font-size:20.5px;color:#e6e6e6;left:2102.5px;width:1200px;text-align:center;"><span id="t78">O</span></div>
<div style="left:2786.5px;top:279px;width:1.2px;height:26px;background:#3c3c3c;"></div>
<div style="left:52.5px;top:279px;width:1.2px;height:26px;background:#9a9a9a;"></div>
<div style="left:87.5px;top:279px;width:1.2px;height:26px;background:#9a9a9a;"></div>
<svg style="left:30px;top:282px;" width="22" height="21" viewBox="0 0 22 21" fill="none"><path d="M19.8 0.7 V19.8 H0.7 Z" fill="#6a6a6a"/></svg>
<div style="left:11px;top:305px;width:42px;height:1365px;background:#0a0a0a;"></div>
<div style="left:11px;top:305.4px;width:41.5px;height:49.4px;background:#686868;"></div>
<div style="left:11px;top:305px;width:41.5px;height:1.1px;background:#a8a8a8;"></div>
<div class="t" style="top:331.38px;font-size:22px;color:#eaeaea;left:-568px;width:1200px;text-align:center;"><span id="t79">1</span></div>
<div style="left:11px;top:354.4px;width:42px;height:1.2px;background:#9a9a9a;"></div>
<div class="t" style="top:372.38px;font-size:22px;color:#eaeaea;left:-568px;width:1200px;text-align:center;"><span id="t80">2</span></div>
<div style="left:11px;top:395.4px;width:42px;height:1.2px;background:#3c3c3c;"></div>
<div class="t" style="top:401.38px;font-size:22px;color:#eaeaea;left:-568px;width:1200px;text-align:center;"><span id="t81">3</span></div>
<div style="left:11px;top:424.4px;width:42px;height:1.2px;background:#3c3c3c;"></div>
<div class="t" style="top:433.38px;font-size:22px;color:#eaeaea;left:-568px;width:1200px;text-align:center;"><span id="t82">4</span></div>
<div style="left:11px;top:456.4px;width:42px;height:1.2px;background:#3c3c3c;"></div>
<div class="t" style="top:462.58px;font-size:22px;color:#eaeaea;left:-568px;width:1200px;text-align:center;"><span id="t83">6</span></div>
<div style="left:11px;top:485.6px;width:42px;height:1.2px;background:#3c3c3c;"></div>
<div class="t" style="top:489.18px;font-size:22px;color:#eaeaea;left:-568px;width:1200px;text-align:center;"><span id="t84">7</span></div>
<div style="left:11px;top:512.2px;width:42px;height:1.2px;background:#3c3c3c;"></div>
<div class="t" style="top:518.68px;font-size:22px;color:#eaeaea;letter-spacing:-1.342px;left:-568.671px;width:1200px;text-align:center;"><span id="t85">13</span></div>
<div style="left:11px;top:541.7px;width:42px;height:1.2px;background:#3c3c3c;"></div>
<div class="t" style="top:567.38px;font-size:22px;color:#eaeaea;letter-spacing:-1.342px;left:-568.671px;width:1200px;text-align:center;"><span id="t86">14</span></div>
<div style="left:11px;top:590.4px;width:42px;height:1.2px;background:#3c3c3c;"></div>
<div class="t" style="top:592.98px;font-size:22px;color:#eaeaea;letter-spacing:-1.342px;left:-568.671px;width:1200px;text-align:center;"><span id="t87">15</span></div>
<div style="left:11px;top:616px;width:42px;height:1.2px;background:#3c3c3c;"></div>
<div class="t" style="top:627.98px;font-size:22px;color:#eaeaea;letter-spacing:-1.342px;left:-568.671px;width:1200px;text-align:center;"><span id="t88">16</span></div>
<div style="left:11px;top:651px;width:42px;height:1.2px;background:#3c3c3c;"></div>
<div class="t" style="top:656.02px;font-size:22px;color:#eaeaea;letter-spacing:-1.342px;left:-568.671px;width:1200px;text-align:center;"><span id="t89">17</span></div>
<div style="left:11px;top:679.04px;width:42px;height:1.2px;background:#3c3c3c;"></div>
<div class="t" style="top:684.06px;font-size:22px;color:#eaeaea;letter-spacing:-1.342px;left:-568.671px;width:1200px;text-align:center;"><span id="t90">18</span></div>
<div style="left:11px;top:707.08px;width:42px;height:1.2px;background:#3c3c3c;"></div>
<div class="t" style="top:712.10px;font-size:22px;color:#eaeaea;letter-spacing:-1.342px;left:-568.671px;width:1200px;text-align:center;"><span id="t91">19</span></div>
<div style="left:11px;top:735.12px;width:42px;height:1.2px;background:#3c3c3c;"></div>
<div class="t" style="top:740.14px;font-size:22px;color:#eaeaea;letter-spacing:-1.342px;left:-568.671px;width:1200px;text-align:center;"><span id="t92">20</span></div>
<div style="left:11px;top:763.16px;width:42px;height:1.2px;background:#3c3c3c;"></div>
<div class="t" style="top:768.18px;font-size:22px;color:#eaeaea;letter-spacing:-1.342px;left:-568.671px;width:1200px;text-align:center;"><span id="t93">21</span></div>
<div style="left:11px;top:791.2px;width:42px;height:1.2px;background:#3c3c3c;"></div>
<div class="t" style="top:796.22px;font-size:22px;color:#eaeaea;letter-spacing:-1.342px;left:-568.671px;width:1200px;text-align:center;"><span id="t94">22</span></div>
<div style="left:11px;top:819.24px;width:42px;height:1.2px;background:#3c3c3c;"></div>
<div class="t" style="top:824.26px;font-size:22px;color:#eaeaea;letter-spacing:-1.342px;left:-568.671px;width:1200px;text-align:center;"><span id="t95">23</span></div>
<div style="left:11px;top:847.28px;width:42px;height:1.2px;background:#3c3c3c;"></div>
<div class="t" style="top:852.30px;font-size:22px;color:#eaeaea;letter-spacing:-1.342px;left:-568.671px;width:1200px;text-align:center;"><span id="t96">24</span></div>
<div style="left:11px;top:875.32px;width:42px;height:1.2px;background:#3c3c3c;"></div>
<div class="t" style="top:880.34px;font-size:22px;color:#eaeaea;letter-spacing:-1.342px;left:-568.671px;width:1200px;text-align:center;"><span id="t97">25</span></div>
<div style="left:11px;top:903.36px;width:42px;height:1.2px;background:#3c3c3c;"></div>
<div class="t" style="top:908.38px;font-size:22px;color:#eaeaea;letter-spacing:-1.342px;left:-568.671px;width:1200px;text-align:center;"><span id="t98">26</span></div>
<div style="left:11px;top:931.4px;width:42px;height:1.2px;background:#3c3c3c;"></div>
<div class="t" style="top:936.42px;font-size:22px;color:#eaeaea;letter-spacing:-1.342px;left:-568.671px;width:1200px;text-align:center;"><span id="t99">27</span></div>
<div style="left:11px;top:959.44px;width:42px;height:1.2px;background:#3c3c3c;"></div>
<div class="t" style="top:964.46px;font-size:22px;color:#eaeaea;letter-spacing:-1.342px;left:-568.671px;width:1200px;text-align:center;"><span id="t100">28</span></div>
<div style="left:11px;top:987.48px;width:42px;height:1.2px;background:#3c3c3c;"></div>
<div class="t" style="top:992.50px;font-size:22px;color:#eaeaea;letter-spacing:-1.342px;left:-568.671px;width:1200px;text-align:center;"><span id="t101">29</span></div>
<div style="left:11px;top:1015.52px;width:42px;height:1.2px;background:#3c3c3c;"></div>
<div class="t" style="top:1020.54px;font-size:22px;color:#eaeaea;letter-spacing:-1.342px;left:-568.671px;width:1200px;text-align:center;"><span id="t102">30</span></div>
<div style="left:11px;top:1043.56px;width:42px;height:1.2px;background:#3c3c3c;"></div>
<div class="t" style="top:1048.58px;font-size:22px;color:#eaeaea;letter-spacing:-1.342px;left:-568.671px;width:1200px;text-align:center;"><span id="t103">31</span></div>
<div style="left:11px;top:1071.6px;width:42px;height:1.2px;background:#3c3c3c;"></div>
<div class="t" style="top:1076.62px;font-size:22px;color:#eaeaea;letter-spacing:-1.342px;left:-568.671px;width:1200px;text-align:center;"><span id="t104">32</span></div>
<div style="left:11px;top:1099.64px;width:42px;height:1.2px;background:#3c3c3c;"></div>
<div class="t" style="top:1104.66px;font-size:22px;color:#eaeaea;letter-spacing:-1.342px;left:-568.671px;width:1200px;text-align:center;"><span id="t105">33</span></div>
<div style="left:11px;top:1127.68px;width:42px;height:1.2px;background:#3c3c3c;"></div>
<div class="t" style="top:1132.70px;font-size:22px;color:#eaeaea;letter-spacing:-1.342px;left:-568.671px;width:1200px;text-align:center;"><span id="t106">34</span></div>
<div style="left:11px;top:1155.72px;width:42px;height:1.2px;background:#3c3c3c;"></div>
<div class="t" style="top:1160.74px;font-size:22px;color:#eaeaea;letter-spacing:-1.342px;left:-568.671px;width:1200px;text-align:center;"><span id="t107">35</span></div>
<div style="left:11px;top:1183.76px;width:42px;height:1.2px;background:#3c3c3c;"></div>
<div class="t" style="top:1188.78px;font-size:22px;color:#eaeaea;letter-spacing:-1.342px;left:-568.671px;width:1200px;text-align:center;"><span id="t108">36</span></div>
<div style="left:11px;top:1211.8px;width:42px;height:1.2px;background:#3c3c3c;"></div>
<div class="t" style="top:1223.98px;font-size:22px;color:#eaeaea;letter-spacing:-1.342px;left:-568.671px;width:1200px;text-align:center;"><span id="t109">37</span></div>
<div style="left:11px;top:1247px;width:42px;height:1.2px;background:#3c3c3c;"></div>
<div class="t" style="top:1251.78px;font-size:22px;color:#eaeaea;letter-spacing:-1.342px;left:-568.671px;width:1200px;text-align:center;"><span id="t110">38</span></div>
<div style="left:11px;top:1274.8px;width:42px;height:1.2px;background:#3c3c3c;"></div>
<div class="t" style="top:1279.88px;font-size:22px;color:#eaeaea;letter-spacing:-1.342px;left:-568.671px;width:1200px;text-align:center;"><span id="t111">39</span></div>
<div style="left:11px;top:1302.9px;width:42px;height:1.2px;background:#3c3c3c;"></div>
<div class="t" style="top:1321.98px;font-size:22px;color:#eaeaea;letter-spacing:-1.342px;left:-568.671px;width:1200px;text-align:center;"><span id="t112">40</span></div>
<div style="left:11px;top:1345px;width:42px;height:1.2px;background:#3c3c3c;"></div>
<div class="t" style="top:1349.78px;font-size:22px;color:#eaeaea;letter-spacing:-1.342px;left:-568.671px;width:1200px;text-align:center;"><span id="t113">41</span></div>
<div style="left:11px;top:1372.8px;width:42px;height:1.2px;background:#3c3c3c;"></div>
<div class="t" style="top:1377.68px;font-size:22px;color:#eaeaea;letter-spacing:-1.342px;left:-568.671px;width:1200px;text-align:center;"><span id="t114">42</span></div>
<div style="left:11px;top:1400.7px;width:42px;height:1.2px;background:#3c3c3c;"></div>
<div class="t" style="top:1405.78px;font-size:22px;color:#eaeaea;letter-spacing:-1.342px;left:-568.671px;width:1200px;text-align:center;"><span id="t115">43</span></div>
<div style="left:11px;top:1428.8px;width:42px;height:1.2px;background:#3c3c3c;"></div>
<div class="t" style="top:1433.78px;font-size:22px;color:#eaeaea;letter-spacing:-1.342px;left:-568.671px;width:1200px;text-align:center;"><span id="t116">44</span></div>
<div style="left:11px;top:1456.8px;width:42px;height:1.2px;background:#3c3c3c;"></div>
<div class="t" style="top:1462.08px;font-size:22px;color:#eaeaea;letter-spacing:-1.342px;left:-568.671px;width:1200px;text-align:center;"><span id="t117">45</span></div>
<div style="left:11px;top:1485.1px;width:42px;height:1.2px;background:#3c3c3c;"></div>
<div class="t" style="top:1503.58px;font-size:22px;color:#eaeaea;letter-spacing:-1.342px;left:-568.671px;width:1200px;text-align:center;"><span id="t118">46</span></div>
<div style="left:11px;top:1526.6px;width:42px;height:1.2px;background:#3c3c3c;"></div>
<div class="t" style="top:1531.48px;font-size:22px;color:#eaeaea;letter-spacing:-1.342px;left:-568.671px;width:1200px;text-align:center;"><span id="t119">47</span></div>
<div style="left:11px;top:1554.5px;width:42px;height:1.2px;background:#3c3c3c;"></div>
<div class="t" style="top:1559.68px;font-size:22px;color:#eaeaea;letter-spacing:-1.342px;left:-568.671px;width:1200px;text-align:center;"><span id="t120">48</span></div>
<div style="left:11px;top:1582.7px;width:42px;height:1.2px;background:#3c3c3c;"></div>
<div class="t" style="top:1588.28px;font-size:22px;color:#eaeaea;letter-spacing:-1.342px;left:-568.671px;width:1200px;text-align:center;"><span id="t121">49</span></div>
<div style="left:11px;top:1611.3px;width:42px;height:1.2px;background:#3c3c3c;"></div>
<div class="t" style="top:1629.48px;font-size:22px;color:#eaeaea;letter-spacing:-1.342px;left:-568.671px;width:1200px;text-align:center;"><span id="t122">50</span></div>
<div style="left:11px;top:1652.5px;width:42px;height:1.2px;background:#3c3c3c;"></div>
<div style="left:11px;top:456.4px;width:42px;height:1.2px;background:#3c3c3c;"></div>
<div style="left:11px;top:459.3px;width:42px;height:1.2px;background:#3c3c3c;"></div>
<div style="left:11px;top:512.4px;width:42px;height:1.2px;background:#8a8a8a;"></div>
<div style="left:11px;top:515px;width:42px;height:1.2px;background:#3c3c3c;"></div>
<div style="left:52.5px;top:305px;width:1px;height:1365px;background:#2a2a2a;"></div>
<div style="left:52.3px;top:304.2px;width:36.6px;height:1.7px;background:#1e7f4a;"></div>
<div style="left:52.2px;top:304.2px;width:1.7px;height:52px;background:#1e7f4a;"></div>
<div class="t" style="top:311.71px;font-size:38.5px;color:#1f1f1f;font-weight:700;letter-spacing:0.871px;left:95px;-webkit-text-stroke:0.7px #1f1f1f;"><span id="t123">Startup Costs (CAPEX)</span></div>
<div class="t" style="top:360.79px;font-size:32.5px;color:#000;font-weight:700;letter-spacing:1.278px;left:93.9px;-webkit-text-stroke:0.6px #000;"><span id="t124">ABC Company Inc.</span></div>
<div class="t" style="top:399.44px;font-size:22.4px;color:#2f7cf6;font-weight:700;letter-spacing:0.183px;left:93.5px;-webkit-text-stroke:0.4px #2f7cf6;"><span id="t125">Go to Table of Contents</span></div>
<div style="left:93px;top:421px;width:257px;height:2px;background:#2f7cf6;"></div>
<div class="t" style="top:462.34px;font-size:22.4px;color:#000;font-weight:700;letter-spacing:0.216px;left:93.5px;-webkit-text-stroke:0.4px #000;"><span id="t126">Fiscal Year</span></div>
<div class="t" style="top:490.34px;font-size:22.4px;color:#000;font-weight:700;letter-spacing:0.532px;left:93.5px;-webkit-text-stroke:0.4px #000;"><span id="t127">Month</span></div>
<div class="t" style="top:548.91px;font-size:38.5px;color:#1f1f1f;font-weight:700;letter-spacing:0.986px;left:95px;-webkit-text-stroke:0.7px #1f1f1f;"><span id="t128">Startup Costs, $</span></div>
<div class="t" style="top:1306.71px;font-size:38.5px;color:#1f1f1f;font-weight:700;letter-spacing:1.185px;left:95px;-webkit-text-stroke:0.7px #1f1f1f;"><span id="t129">Startup Costs Depreciation, $</span></div>
<div class="t" style="top:462.34px;font-size:22.4px;color:#000;font-weight:700;letter-spacing:1.047px;left:569.547px;width:1200px;text-align:right;-webkit-text-stroke:0.4px #000;"><span id="t130">2025</span></div>
<div class="t" style="top:490.34px;font-size:22.4px;color:#000;font-weight:700;letter-spacing:0.760px;left:569.26px;width:1200px;text-align:right;-webkit-text-stroke:0.4px #000;"><span id="t131">Dec-25</span></div>
<div class="t" style="top:462.34px;font-size:22.4px;color:#000;font-weight:700;letter-spacing:1.047px;left:738.547px;width:1200px;text-align:right;-webkit-text-stroke:0.4px #000;"><span id="t132">2026</span></div>
<div class="t" style="top:490.34px;font-size:22.4px;color:#000;font-weight:700;letter-spacing:0.591px;left:738.091px;width:1200px;text-align:right;-webkit-text-stroke:0.4px #000;"><span id="t133">Jan-26</span></div>
<div class="t" style="top:462.34px;font-size:22.4px;color:#000;font-weight:700;letter-spacing:1.047px;left:907.547px;width:1200px;text-align:right;-webkit-text-stroke:0.4px #000;"><span id="t134">2026</span></div>
<div class="t" style="top:490.34px;font-size:22.4px;color:#000;font-weight:700;letter-spacing:0.538px;left:907.038px;width:1200px;text-align:right;-webkit-text-stroke:0.4px #000;"><span id="t135">Feb-26</span></div>
<div class="t" style="top:462.34px;font-size:22.4px;color:#000;font-weight:700;letter-spacing:1.047px;left:1076.55px;width:1200px;text-align:right;-webkit-text-stroke:0.4px #000;"><span id="t136">2026</span></div>
<div class="t" style="top:490.34px;font-size:22.4px;color:#000;font-weight:700;letter-spacing:1.135px;left:1076.63px;width:1200px;text-align:right;-webkit-text-stroke:0.4px #000;"><span id="t137">Mar-26</span></div>
<div class="t" style="top:462.34px;font-size:22.4px;color:#000;font-weight:700;letter-spacing:1.047px;left:1245.55px;width:1200px;text-align:right;-webkit-text-stroke:0.4px #000;"><span id="t138">2026</span></div>
<div class="t" style="top:490.34px;font-size:22.4px;color:#000;font-weight:700;letter-spacing:0.760px;left:1245.26px;width:1200px;text-align:right;-webkit-text-stroke:0.4px #000;"><span id="t139">Apr-26</span></div>
<div class="t" style="top:462.34px;font-size:22.4px;color:#000;font-weight:700;letter-spacing:1.047px;left:1414.55px;width:1200px;text-align:right;-webkit-text-stroke:0.4px #000;"><span id="t140">2026</span></div>
<div class="t" style="top:490.34px;font-size:22.4px;color:#000;font-weight:700;letter-spacing:0.930px;left:1414.43px;width:1200px;text-align:right;-webkit-text-stroke:0.4px #000;"><span id="t141">May-26</span></div>
<div class="t" style="top:462.34px;font-size:22.4px;color:#000;font-weight:700;letter-spacing:1.047px;left:1583.55px;width:1200px;text-align:right;-webkit-text-stroke:0.4px #000;"><span id="t142">2026</span></div>
<div class="t" style="top:490.34px;font-size:22.4px;color:#000;font-weight:700;letter-spacing:0.555px;left:1583.06px;width:1200px;text-align:right;-webkit-text-stroke:0.4px #000;"><span id="t143">Jun-26</span></div>
<div style="left:137.5px;top:617px;width:809px;height:33px;background:#6e74e8;"></div>
<div style="left:948.3px;top:617px;width:204.4px;height:33px;background:#6e74e8;"></div>
<div style="left:1154.3px;top:617px;width:204.4px;height:33px;background:#6e74e8;"></div>
<div style="left:1360.3px;top:617px;width:205.4px;height:33px;background:#6e74e8;"></div>
<div style="left:1567.3px;top:617px;width:205.7px;height:33px;background:#6e74e8;"></div>
<div class="t" style="top:623.44px;font-size:22.4px;color:#fff;font-weight:700;letter-spacing:0.277px;left:-57.8615px;width:1200px;text-align:center;-webkit-text-stroke:0.4px #fff;"><span id="t144">Categories</span></div>
<div class="t" style="top:623.44px;font-size:22.4px;color:#fff;font-weight:700;letter-spacing:0.148px;left:450.574px;width:1200px;text-align:center;-webkit-text-stroke:0.4px #fff;"><span id="t145">Launch date</span></div>
<div class="t" style="top:623.44px;font-size:22.4px;color:#fff;font-weight:700;letter-spacing:0.242px;left:656.621px;width:1200px;text-align:center;-webkit-text-stroke:0.4px #fff;"><span id="t146">End date</span></div>
<div class="t" style="top:623.44px;font-size:22.4px;color:#fff;font-weight:700;letter-spacing:0.328px;left:863.164px;width:1200px;text-align:center;-webkit-text-stroke:0.4px #fff;"><span id="t147">Spending, $</span></div>
<div class="t" style="top:623.44px;font-size:22.4px;color:#fff;font-weight:700;letter-spacing:0.348px;left:1070.67px;width:1200px;text-align:center;-webkit-text-stroke:0.4px #fff;"><span id="t148">Amortizable?</span></div>
<div style="left:139px;top:653.3px;width:1633px;height:559.1px;background:#fff06a;"></div>
<div style="left:139px;top:679.54px;width:1633px;height:1.3px;background:#fff9c8;"></div>
<div style="left:139px;top:707.58px;width:1633px;height:1.3px;background:#fff9c8;"></div>
<div style="left:139px;top:735.62px;width:1633px;height:1.3px;background:#fff9c8;"></div>
<div style="left:139px;top:763.66px;width:1633px;height:1.3px;background:#fff9c8;"></div>
<div style="left:139px;top:791.7px;width:1633px;height:1.3px;background:#fff9c8;"></div>
<div style="left:139px;top:819.74px;width:1633px;height:1.3px;background:#fff9c8;"></div>
<div style="left:139px;top:847.78px;width:1633px;height:1.3px;background:#fff9c8;"></div>
<div style="left:139px;top:875.82px;width:1633px;height:1.3px;background:#fff9c8;"></div>
<div style="left:139px;top:903.86px;width:1633px;height:1.3px;background:#fff9c8;"></div>
<div style="left:139px;top:931.9px;width:1633px;height:1.3px;background:#fff9c8;"></div>
<div style="left:139px;top:959.94px;width:1633px;height:1.3px;background:#fff9c8;"></div>
<div style="left:139px;top:987.98px;width:1633px;height:1.3px;background:#fff9c8;"></div>
<div style="left:139px;top:1016.02px;width:1633px;height:1.3px;background:#fff9c8;"></div>
<div style="left:139px;top:1044.06px;width:1633px;height:1.3px;background:#fff9c8;"></div>
<div style="left:139px;top:1072.1px;width:1633px;height:1.3px;background:#fff9c8;"></div>
<div style="left:139px;top:1100.14px;width:1633px;height:1.3px;background:#fff9c8;"></div>
<div style="left:139px;top:1128.18px;width:1633px;height:1.3px;background:#fff9c8;"></div>
<div style="left:139px;top:1156.22px;width:1633px;height:1.3px;background:#fff9c8;"></div>
<div style="left:139px;top:1184.26px;width:1633px;height:1.3px;background:#fff9c8;"></div>
<div style="left:945.9px;top:653.3px;width:3.2px;height:559.1px;background:#fffdf2;"></div>
<div style="left:1151.9px;top:653.3px;width:3.2px;height:559.1px;background:#fffdf2;"></div>
<div style="left:1357.9px;top:653.3px;width:3.2px;height:559.1px;background:#fffdf2;"></div>
<div style="left:1564.9px;top:653.3px;width:3.2px;height:559.1px;background:#fffdf2;"></div>
<div class="t" style="top:656.14px;font-size:22.4px;color:#000;letter-spacing:-0.280px;left:140.5px;"><span id="t149">Fiber Optic Cable and Installation Equipment</span></div>
<div class="t" style="top:656.14px;font-size:22.4px;color:#000;letter-spacing:-0.611px;left:449.695px;width:1200px;text-align:center;"><span id="t150">Jan-26</span></div>
<div class="t" style="top:656.14px;font-size:22.4px;color:#000;letter-spacing:-0.495px;left:656.253px;width:1200px;text-align:center;"><span id="t151">Jun-26</span></div>
<div class="t" style="top:656.14px;font-size:22.4px;color:#000;letter-spacing:-0.268px;left:354.232px;width:1200px;text-align:right;"><span id="t152">2,500,000</span></div>
<div class="t" style="top:656.14px;font-size:22.4px;color:#000;letter-spacing:-0.344px;left:1069.83px;width:1200px;text-align:center;"><span id="t153">Yes</span></div>
<div class="t" style="top:656.14px;font-size:22.4px;color:#000;letter-spacing:-0.394px;left:730.106px;width:1200px;text-align:right;"><span id="t154">416,667</span></div>
<div class="t" style="top:656.14px;font-size:22.4px;color:#000;letter-spacing:-0.394px;left:899.106px;width:1200px;text-align:right;"><span id="t155">416,667</span></div>
<div class="t" style="top:656.14px;font-size:22.4px;color:#000;letter-spacing:-0.394px;left:1068.11px;width:1200px;text-align:right;"><span id="t156">416,667</span></div>
<div class="t" style="top:656.14px;font-size:22.4px;color:#000;letter-spacing:-0.394px;left:1237.11px;width:1200px;text-align:right;"><span id="t157">416,667</span></div>
<div class="t" style="top:656.14px;font-size:22.4px;color:#000;letter-spacing:-0.394px;left:1406.11px;width:1200px;text-align:right;"><span id="t158">416,667</span></div>
<div class="t" style="top:656.14px;font-size:22.4px;color:#000;letter-spacing:-0.394px;left:1575.11px;width:1200px;text-align:right;"><span id="t159">416,667</span></div>
<div class="t" style="top:684.18px;font-size:22.4px;color:#000;letter-spacing:-0.334px;left:140.5px;"><span id="t160">Network Core Equipment and Routers</span></div>
<div class="t" style="top:684.18px;font-size:22.4px;color:#000;letter-spacing:-0.611px;left:449.695px;width:1200px;text-align:center;"><span id="t161">Jan-26</span></div>
<div class="t" style="top:684.18px;font-size:22.4px;color:#000;letter-spacing:-0.240px;left:656.38px;width:1200px;text-align:center;"><span id="t162">Mar-26</span></div>
<div class="t" style="top:684.18px;font-size:22.4px;color:#000;letter-spacing:-0.394px;left:354.106px;width:1200px;text-align:right;"><span id="t163">850,000</span></div>
<div class="t" style="top:684.18px;font-size:22.4px;color:#000;letter-spacing:-0.344px;left:1069.83px;width:1200px;text-align:center;"><span id="t164">Yes</span></div>
<div class="t" style="top:684.18px;font-size:22.4px;color:#000;letter-spacing:-0.394px;left:730.106px;width:1200px;text-align:right;"><span id="t165">283,333</span></div>
<div class="t" style="top:684.18px;font-size:22.4px;color:#000;letter-spacing:-0.394px;left:899.106px;width:1200px;text-align:right;"><span id="t166">283,333</span></div>
<div class="t" style="top:684.18px;font-size:22.4px;color:#000;letter-spacing:-0.394px;left:1068.11px;width:1200px;text-align:right;"><span id="t167">283,333</span></div>
<div class="t" style="top:683.78px;font-size:22.4px;color:#000;left:2406.4px;"><span id="t168">-</span></div>
<div class="t" style="top:683.78px;font-size:22.4px;color:#000;left:2575.4px;"><span id="t169">-</span></div>
<div class="t" style="top:683.78px;font-size:22.4px;color:#000;left:2744.4px;"><span id="t170">-</span></div>
<div class="t" style="top:712.22px;font-size:22.4px;color:#000;letter-spacing:-0.409px;left:140.5px;"><span id="t171">Wireless Access Points and Hardware</span></div>
<div class="t" style="top:712.22px;font-size:22.4px;color:#000;letter-spacing:-0.659px;left:449.671px;width:1200px;text-align:center;"><span id="t172">Feb-26</span></div>
<div class="t" style="top:712.22px;font-size:22.4px;color:#000;letter-spacing:-0.445px;left:656.278px;width:1200px;text-align:center;"><span id="t173">May-26</span></div>
<div class="t" style="top:712.22px;font-size:22.4px;color:#000;letter-spacing:-0.394px;left:354.106px;width:1200px;text-align:right;"><span id="t174">420,000</span></div>
<div class="t" style="top:712.22px;font-size:22.4px;color:#000;letter-spacing:-0.344px;left:1069.83px;width:1200px;text-align:center;"><span id="t175">Yes</span></div>
<div class="t" style="top:711.82px;font-size:22.4px;color:#000;left:1899.4px;"><span id="t176">-</span></div>
<div class="t" style="top:712.22px;font-size:22.4px;color:#000;letter-spacing:-0.394px;left:899.106px;width:1200px;text-align:right;"><span id="t177">105,000</span></div>
<div class="t" style="top:712.22px;font-size:22.4px;color:#000;letter-spacing:-0.394px;left:1068.11px;width:1200px;text-align:right;"><span id="t178">105,000</span></div>
<div class="t" style="top:712.22px;font-size:22.4px;color:#000;letter-spacing:-0.394px;left:1237.11px;width:1200px;text-align:right;"><span id="t179">105,000</span></div>
<div class="t" style="top:712.22px;font-size:22.4px;color:#000;letter-spacing:-0.394px;left:1406.11px;width:1200px;text-align:right;"><span id="t180">105,000</span></div>
<div class="t" style="top:711.82px;font-size:22.4px;color:#000;left:2744.4px;"><span id="t181">-</span></div>
<div class="t" style="top:740.26px;font-size:22.4px;color:#000;letter-spacing:-0.111px;left:140.5px;"><span id="t182">Network Operations Center Infrastructure</span></div>
<div class="t" style="top:740.26px;font-size:22.4px;color:#000;letter-spacing:-0.611px;left:449.695px;width:1200px;text-align:center;"><span id="t183">Jan-26</span></div>
<div class="t" style="top:740.26px;font-size:22.4px;color:#000;letter-spacing:-0.615px;left:656.192px;width:1200px;text-align:center;"><span id="t184">Dec-26</span></div>
<div class="t" style="top:740.26px;font-size:22.4px;color:#000;letter-spacing:-0.394px;left:354.106px;width:1200px;text-align:right;"><span id="t185">380,000</span></div>
<div class="t" style="top:740.26px;font-size:22.4px;color:#000;letter-spacing:-0.344px;left:1069.83px;width:1200px;text-align:center;"><span id="t186">Yes</span></div>
<div class="t" style="top:740.26px;font-size:22.4px;color:#000;letter-spacing:-0.422px;left:730.078px;width:1200px;text-align:right;"><span id="t187">31,667</span></div>
<div class="t" style="top:740.26px;font-size:22.4px;color:#000;letter-spacing:-0.422px;left:899.078px;width:1200px;text-align:right;"><span id="t188">31,667</span></div>
<div class="t" style="top:740.26px;font-size:22.4px;color:#000;letter-spacing:-0.422px;left:1068.08px;width:1200px;text-align:right;"><span id="t189">31,667</span></div>
<div class="t" style="top:740.26px;font-size:22.4px;color:#000;letter-spacing:-0.422px;left:1237.08px;width:1200px;text-align:right;"><span id="t190">31,667</span></div>
<div class="t" style="top:740.26px;font-size:22.4px;color:#000;letter-spacing:-0.422px;left:1406.08px;width:1200px;text-align:right;"><span id="t191">31,667</span></div>
<div class="t" style="top:740.26px;font-size:22.4px;color:#000;letter-spacing:-0.422px;left:1575.08px;width:1200px;text-align:right;"><span id="t192">31,667</span></div>
<div class="t" style="top:768.30px;font-size:22.4px;color:#000;letter-spacing:-0.532px;left:140.5px;"><span id="t193">Customer Premises Equipment</span></div>
<div class="t" style="top:768.30px;font-size:22.4px;color:#000;letter-spacing:-0.240px;left:449.88px;width:1200px;text-align:center;"><span id="t194">Mar-26</span></div>
<div class="t" style="top:768.30px;font-size:22.4px;color:#000;letter-spacing:-0.784px;left:656.108px;width:1200px;text-align:center;"><span id="t195">Sep-26</span></div>
<div class="t" style="top:768.30px;font-size:22.4px;color:#000;letter-spacing:-0.394px;left:354.106px;width:1200px;text-align:right;"><span id="t196">280,000</span></div>
<div class="t" style="top:768.30px;font-size:22.4px;color:#000;letter-spacing:-0.344px;left:1069.83px;width:1200px;text-align:center;"><span id="t197">Yes</span></div>
<div class="t" style="top:767.90px;font-size:22.4px;color:#000;left:1899.4px;"><span id="t198">-</span></div>
<div class="t" style="top:767.90px;font-size:22.4px;color:#000;left:2068.4px;"><span id="t199">-</span></div>
<div class="t" style="top:768.30px;font-size:22.4px;color:#000;letter-spacing:-0.422px;left:1068.08px;width:1200px;text-align:right;"><span id="t200">40,000</span></div>
<div class="t" style="top:768.30px;font-size:22.4px;color:#000;letter-spacing:-0.422px;left:1237.08px;width:1200px;text-align:right;"><span id="t201">40,000</span></div>
<div class="t" style="top:768.30px;font-size:22.4px;color:#000;letter-spacing:-0.422px;left:1406.08px;width:1200px;text-align:right;"><span id="t202">40,000</span></div>
<div class="t" style="top:768.30px;font-size:22.4px;color:#000;letter-spacing:-0.422px;left:1575.08px;width:1200px;text-align:right;"><span id="t203">40,000</span></div>
<div class="t" style="top:796.34px;font-size:22.4px;color:#000;letter-spacing:-0.490px;left:140.5px;"><span id="t204">Billing and CRM Software Systems</span></div>
<div class="t" style="top:796.34px;font-size:22.4px;color:#000;letter-spacing:-0.611px;left:449.695px;width:1200px;text-align:center;"><span id="t205">Jan-26</span></div>
<div class="t" style="top:796.34px;font-size:22.4px;color:#000;letter-spacing:-0.240px;left:656.38px;width:1200px;text-align:center;"><span id="t206">Mar-26</span></div>
<div class="t" style="top:796.34px;font-size:22.4px;color:#000;letter-spacing:-0.394px;left:354.106px;width:1200px;text-align:right;"><span id="t207">150,000</span></div>
<div class="t" style="top:796.34px;font-size:22.4px;color:#000;letter-spacing:-0.344px;left:1069.83px;width:1200px;text-align:center;"><span id="t208">Yes</span></div>
<div class="t" style="top:796.34px;font-size:22.4px;color:#000;letter-spacing:-0.422px;left:730.078px;width:1200px;text-align:right;"><span id="t209">50,000</span></div>
<div class="t" style="top:796.34px;font-size:22.4px;color:#000;letter-spacing:-0.422px;left:899.078px;width:1200px;text-align:right;"><span id="t210">50,000</span></div>
<div class="t" style="top:796.34px;font-size:22.4px;color:#000;letter-spacing:-0.422px;left:1068.08px;width:1200px;text-align:right;"><span id="t211">50,000</span></div>
<div class="t" style="top:795.94px;font-size:22.4px;color:#000;left:2406.4px;"><span id="t212">-</span></div>
<div class="t" style="top:795.94px;font-size:22.4px;color:#000;left:2575.4px;"><span id="t213">-</span></div>
<div class="t" style="top:795.94px;font-size:22.4px;color:#000;left:2744.4px;"><span id="t214">-</span></div>
<div class="t" style="top:824.38px;font-size:22.4px;color:#000;letter-spacing:-0.252px;left:140.5px;"><span id="t215">Vehicle Fleet for Field Operations</span></div>
<div class="t" style="top:824.38px;font-size:22.4px;color:#000;letter-spacing:-0.659px;left:449.671px;width:1200px;text-align:center;"><span id="t216">Feb-26</span></div>
<div class="t" style="top:824.38px;font-size:22.4px;color:#000;letter-spacing:-0.617px;left:656.192px;width:1200px;text-align:center;"><span id="t217">Aug-26</span></div>
<div class="t" style="top:824.38px;font-size:22.4px;color:#000;letter-spacing:-0.394px;left:354.106px;width:1200px;text-align:right;"><span id="t218">320,000</span></div>
<div class="t" style="top:824.38px;font-size:22.4px;color:#000;letter-spacing:-0.344px;left:1069.83px;width:1200px;text-align:center;"><span id="t219">Yes</span></div>
<div class="t" style="top:823.98px;font-size:22.4px;color:#000;left:1899.4px;"><span id="t220">-</span></div>
<div class="t" style="top:824.38px;font-size:22.4px;color:#000;letter-spacing:-0.422px;left:899.078px;width:1200px;text-align:right;"><span id="t221">45,714</span></div>
<div class="t" style="top:824.38px;font-size:22.4px;color:#000;letter-spacing:-0.422px;left:1068.08px;width:1200px;text-align:right;"><span id="t222">45,714</span></div>
<div class="t" style="top:824.38px;font-size:22.4px;color:#000;letter-spacing:-0.422px;left:1237.08px;width:1200px;text-align:right;"><span id="t223">45,714</span></div>
<div class="t" style="top:824.38px;font-size:22.4px;color:#000;letter-spacing:-0.422px;left:1406.08px;width:1200px;text-align:right;"><span id="t224">45,714</span></div>
<div class="t" style="top:824.38px;font-size:22.4px;color:#000;letter-spacing:-0.422px;left:1575.08px;width:1200px;text-align:right;"><span id="t225">45,714</span></div>
<div class="t" style="top:852.42px;font-size:22.4px;color:#000;letter-spacing:-0.200px;left:140.5px;"><span id="t226">Office and Administrative Equipment</span></div>
<div class="t" style="top:852.42px;font-size:22.4px;color:#000;letter-spacing:-0.611px;left:449.695px;width:1200px;text-align:center;"><span id="t227">Jan-26</span></div>
<div class="t" style="top:852.42px;font-size:22.4px;color:#000;letter-spacing:-0.659px;left:656.17px;width:1200px;text-align:center;"><span id="t228">Feb-26</span></div>
<div class="t" style="top:852.42px;font-size:22.4px;color:#000;letter-spacing:-0.422px;left:354.078px;width:1200px;text-align:right;"><span id="t229">95,000</span></div>
<div class="t" style="top:852.42px;font-size:22.4px;color:#000;letter-spacing:-0.344px;left:1069.83px;width:1200px;text-align:center;"><span id="t230">Yes</span></div>
<div class="t" style="top:852.42px;font-size:22.4px;color:#000;letter-spacing:-0.422px;left:730.078px;width:1200px;text-align:right;"><span id="t231">47,500</span></div>
<div class="t" style="top:852.42px;font-size:22.4px;color:#000;letter-spacing:-0.422px;left:899.078px;width:1200px;text-align:right;"><span id="t232">47,500</span></div>
<div class="t" style="top:852.02px;font-size:22.4px;color:#000;left:2237.4px;"><span id="t233">-</span></div>
<div class="t" style="top:852.02px;font-size:22.4px;color:#000;left:2406.4px;"><span id="t234">-</span></div>
<div class="t" style="top:852.02px;font-size:22.4px;color:#000;left:2575.4px;"><span id="t235">-</span></div>
<div class="t" style="top:852.02px;font-size:22.4px;color:#000;left:2744.4px;"><span id="t236">-</span></div>
<div class="t" style="top:880.46px;font-size:22.4px;color:#000;letter-spacing:-0.311px;left:140.5px;"><span id="t237">Network Monitoring and Security Systems</span></div>
<div class="t" style="top:880.46px;font-size:22.4px;color:#000;letter-spacing:-0.203px;left:449.899px;width:1200px;text-align:center;"><span id="t238">Apr-26</span></div>
<div class="t" style="top:880.46px;font-size:22.4px;color:#000;letter-spacing:-0.495px;left:656.253px;width:1200px;text-align:center;"><span id="t239">Jun-26</span></div>
<div class="t" style="top:880.46px;font-size:22.4px;color:#000;letter-spacing:-0.394px;left:354.106px;width:1200px;text-align:right;"><span id="t240">180,000</span></div>
<div class="t" style="top:880.46px;font-size:22.4px;color:#000;letter-spacing:-0.344px;left:1069.83px;width:1200px;text-align:center;"><span id="t241">Yes</span></div>
<div class="t" style="top:880.06px;font-size:22.4px;color:#000;left:1899.4px;"><span id="t242">-</span></div>
<div class="t" style="top:880.06px;font-size:22.4px;color:#000;left:2068.4px;"><span id="t243">-</span></div>
<div class="t" style="top:880.06px;font-size:22.4px;color:#000;left:2237.4px;"><span id="t244">-</span></div>
<div class="t" style="top:880.46px;font-size:22.4px;color:#000;letter-spacing:-0.422px;left:1237.08px;width:1200px;text-align:right;"><span id="t245">60,000</span></div>
<div class="t" style="top:880.46px;font-size:22.4px;color:#000;letter-spacing:-0.422px;left:1406.08px;width:1200px;text-align:right;"><span id="t246">60,000</span></div>
<div class="t" style="top:880.46px;font-size:22.4px;color:#000;letter-spacing:-0.422px;left:1575.08px;width:1200px;text-align:right;"><span id="t247">60,000</span></div>
<div class="t" style="top:908.50px;font-size:22.4px;color:#000;letter-spacing:-0.528px;left:140.5px;"><span id="t248">Backup Power and Redundancy Systems</span></div>
<div class="t" style="top:908.50px;font-size:22.4px;color:#000;letter-spacing:-0.445px;left:449.777px;width:1200px;text-align:center;"><span id="t249">May-26</span></div>
<div class="t" style="top:908.50px;font-size:22.4px;color:#000;letter-spacing:-0.201px;left:656.399px;width:1200px;text-align:center;"><span id="t250">Oct-26</span></div>
<div class="t" style="top:908.50px;font-size:22.4px;color:#000;letter-spacing:-0.394px;left:354.106px;width:1200px;text-align:right;"><span id="t251">225,000</span></div>
<div class="t" style="top:908.50px;font-size:22.4px;color:#000;letter-spacing:-0.344px;left:1069.83px;width:1200px;text-align:center;"><span id="t252">Yes</span></div>
<div class="t" style="top:908.10px;font-size:22.4px;color:#000;left:1899.4px;"><span id="t253">-</span></div>
<div class="t" style="top:908.10px;font-size:22.4px;color:#000;left:2068.4px;"><span id="t254">-</span></div>
<div class="t" style="top:908.10px;font-size:22.4px;color:#000;left:2237.4px;"><span id="t255">-</span></div>
<div class="t" style="top:908.10px;font-size:22.4px;color:#000;left:2406.4px;"><span id="t256">-</span></div>
<div class="t" style="top:908.50px;font-size:22.4px;color:#000;letter-spacing:-0.422px;left:1406.08px;width:1200px;text-align:right;"><span id="t257">37,500</span></div>
<div class="t" style="top:908.50px;font-size:22.4px;color:#000;letter-spacing:-0.422px;left:1575.08px;width:1200px;text-align:right;"><span id="t258">37,500</span></div>
<div class="t" style="top:936.54px;font-size:22.4px;color:#000;left:140.8px;"><span id="t259">-</span></div>
<div class="t" style="top:936.54px;font-size:22.4px;color:#000;letter-spacing:-0.344px;left:1069.83px;width:1200px;text-align:center;"><span id="t260">Yes</span></div>
<div class="t" style="top:936.14px;font-size:22.4px;color:#000;left:1899.4px;"><span id="t261">-</span></div>
<div class="t" style="top:936.14px;font-size:22.4px;color:#000;left:2068.4px;"><span id="t262">-</span></div>
<div class="t" style="top:936.14px;font-size:22.4px;color:#000;left:2237.4px;"><span id="t263">-</span></div>
<div class="t" style="top:936.14px;font-size:22.4px;color:#000;left:2406.4px;"><span id="t264">-</span></div>
<div class="t" style="top:936.14px;font-size:22.4px;color:#000;left:2575.4px;"><span id="t265">-</span></div>
<div class="t" style="top:936.14px;font-size:22.4px;color:#000;left:2744.4px;"><span id="t266">-</span></div>
<div class="t" style="top:964.58px;font-size:22.4px;color:#000;left:140.8px;"><span id="t267">-</span></div>
<div class="t" style="top:964.58px;font-size:22.4px;color:#000;letter-spacing:-0.344px;left:1069.83px;width:1200px;text-align:center;"><span id="t268">Yes</span></div>
<div class="t" style="top:964.18px;font-size:22.4px;color:#000;left:1899.4px;"><span id="t269">-</span></div>
<div class="t" style="top:964.18px;font-size:22.4px;color:#000;left:2068.4px;"><span id="t270">-</span></div>
<div class="t" style="top:964.18px;font-size:22.4px;color:#000;left:2237.4px;"><span id="t271">-</span></div>
<div class="t" style="top:964.18px;font-size:22.4px;color:#000;left:2406.4px;"><span id="t272">-</span></div>
<div class="t" style="top:964.18px;font-size:22.4px;color:#000;left:2575.4px;"><span id="t273">-</span></div>
<div class="t" style="top:964.18px;font-size:22.4px;color:#000;left:2744.4px;"><span id="t274">-</span></div>
<div class="t" style="top:992.62px;font-size:22.4px;color:#000;left:140.8px;"><span id="t275">-</span></div>
<div class="t" style="top:992.62px;font-size:22.4px;color:#000;letter-spacing:-0.344px;left:1069.83px;width:1200px;text-align:center;"><span id="t276">Yes</span></div>
<div class="t" style="top:992.22px;font-size:22.4px;color:#000;left:1899.4px;"><span id="t277">-</span></div>
<div class="t" style="top:992.22px;font-size:22.4px;color:#000;left:2068.4px;"><span id="t278">-</span></div>
<div class="t" style="top:992.22px;font-size:22.4px;color:#000;left:2237.4px;"><span id="t279">-</span></div>
<div class="t" style="top:992.22px;font-size:22.4px;color:#000;left:2406.4px;"><span id="t280">-</span></div>
<div class="t" style="top:992.22px;font-size:22.4px;color:#000;left:2575.4px;"><span id="t281">-</span></div>
<div class="t" style="top:992.22px;font-size:22.4px;color:#000;left:2744.4px;"><span id="t282">-</span></div>
<div class="t" style="top:1020.66px;font-size:22.4px;color:#000;left:140.8px;"><span id="t283">-</span></div>
<div class="t" style="top:1020.66px;font-size:22.4px;color:#000;letter-spacing:-0.344px;left:1069.83px;width:1200px;text-align:center;"><span id="t284">Yes</span></div>
<div class="t" style="top:1020.26px;font-size:22.4px;color:#000;left:1899.4px;"><span id="t285">-</span></div>
<div class="t" style="top:1020.26px;font-size:22.4px;color:#000;left:2068.4px;"><span id="t286">-</span></div>
<div class="t" style="top:1020.26px;font-size:22.4px;color:#000;left:2237.4px;"><span id="t287">-</span></div>
<div class="t" style="top:1020.26px;font-size:22.4px;color:#000;left:2406.4px;"><span id="t288">-</span></div>
<div class="t" style="top:1020.26px;font-size:22.4px;color:#000;left:2575.4px;"><span id="t289">-</span></div>
<div class="t" style="top:1020.26px;font-size:22.4px;color:#000;left:2744.4px;"><span id="t290">-</span></div>
<div class="t" style="top:1048.70px;font-size:22.4px;color:#000;left:140.8px;"><span id="t291">-</span></div>
<div class="t" style="top:1048.70px;font-size:22.4px;color:#000;letter-spacing:-0.344px;left:1069.83px;width:1200px;text-align:center;"><span id="t292">Yes</span></div>
<div class="t" style="top:1048.30px;font-size:22.4px;color:#000;left:1899.4px;"><span id="t293">-</span></div>
<div class="t" style="top:1048.30px;font-size:22.4px;color:#000;left:2068.4px;"><span id="t294">-</span></div>
<div class="t" style="top:1048.30px;font-size:22.4px;color:#000;left:2237.4px;"><span id="t295">-</span></div>
<div class="t" style="top:1048.30px;font-size:22.4px;color:#000;left:2406.4px;"><span id="t296">-</span></div>
<div class="t" style="top:1048.30px;font-size:22.4px;color:#000;left:2575.4px;"><span id="t297">-</span></div>
<div class="t" style="top:1048.30px;font-size:22.4px;color:#000;left:2744.4px;"><span id="t298">-</span></div>
<div class="t" style="top:1076.74px;font-size:22.4px;color:#000;left:140.8px;"><span id="t299">-</span></div>
<div class="t" style="top:1076.74px;font-size:22.4px;color:#000;letter-spacing:-0.344px;left:1069.83px;width:1200px;text-align:center;"><span id="t300">Yes</span></div>
<div class="t" style="top:1076.34px;font-size:22.4px;color:#000;left:1899.4px;"><span id="t301">-</span></div>
<div class="t" style="top:1076.34px;font-size:22.4px;color:#000;left:2068.4px;"><span id="t302">-</span></div>
<div class="t" style="top:1076.34px;font-size:22.4px;color:#000;left:2237.4px;"><span id="t303">-</span></div>
<div class="t" style="top:1076.34px;font-size:22.4px;color:#000;left:2406.4px;"><span id="t304">-</span></div>
<div class="t" style="top:1076.34px;font-size:22.4px;color:#000;left:2575.4px;"><span id="t305">-</span></div>
<div class="t" style="top:1076.34px;font-size:22.4px;color:#000;left:2744.4px;"><span id="t306">-</span></div>
<div class="t" style="top:1104.78px;font-size:22.4px;color:#000;left:140.8px;"><span id="t307">-</span></div>
<div class="t" style="top:1104.78px;font-size:22.4px;color:#000;letter-spacing:-0.344px;left:1069.83px;width:1200px;text-align:center;"><span id="t308">Yes</span></div>
<div class="t" style="top:1104.38px;font-size:22.4px;color:#000;left:1899.4px;"><span id="t309">-</span></div>
<div class="t" style="top:1104.38px;font-size:22.4px;color:#000;left:2068.4px;"><span id="t310">-</span></div>
<div class="t" style="top:1104.38px;font-size:22.4px;color:#000;left:2237.4px;"><span id="t311">-</span></div>
<div class="t" style="top:1104.38px;font-size:22.4px;color:#000;left:2406.4px;"><span id="t312">-</span></div>
<div class="t" style="top:1104.38px;font-size:22.4px;color:#000;left:2575.4px;"><span id="t313">-</span></div>
<div class="t" style="top:1104.38px;font-size:22.4px;color:#000;left:2744.4px;"><span id="t314">-</span></div>
<div class="t" style="top:1132.82px;font-size:22.4px;color:#000;left:140.8px;"><span id="t315">-</span></div>
<div class="t" style="top:1132.82px;font-size:22.4px;color:#000;letter-spacing:-0.344px;left:1069.83px;width:1200px;text-align:center;"><span id="t316">Yes</span></div>
<div class="t" style="top:1132.42px;font-size:22.4px;color:#000;left:1899.4px;"><span id="t317">-</span></div>
<div class="t" style="top:1132.42px;font-size:22.4px;color:#000;left:2068.4px;"><span id="t318">-</span></div>
<div class="t" style="top:1132.42px;font-size:22.4px;color:#000;left:2237.4px;"><span id="t319">-</span></div>
<div class="t" style="top:1132.42px;font-size:22.4px;color:#000;left:2406.4px;"><span id="t320">-</span></div>
<div class="t" style="top:1132.42px;font-size:22.4px;color:#000;left:2575.4px;"><span id="t321">-</span></div>
<div class="t" style="top:1132.42px;font-size:22.4px;color:#000;left:2744.4px;"><span id="t322">-</span></div>
<div class="t" style="top:1160.86px;font-size:22.4px;color:#000;left:140.8px;"><span id="t323">-</span></div>
<div class="t" style="top:1160.86px;font-size:22.4px;color:#000;letter-spacing:-0.344px;left:1069.83px;width:1200px;text-align:center;"><span id="t324">Yes</span></div>
<div class="t" style="top:1160.46px;font-size:22.4px;color:#000;left:1899.4px;"><span id="t325">-</span></div>
<div class="t" style="top:1160.46px;font-size:22.4px;color:#000;left:2068.4px;"><span id="t326">-</span></div>
<div class="t" style="top:1160.46px;font-size:22.4px;color:#000;left:2237.4px;"><span id="t327">-</span></div>
<div class="t" style="top:1160.46px;font-size:22.4px;color:#000;left:2406.4px;"><span id="t328">-</span></div>
<div class="t" style="top:1160.46px;font-size:22.4px;color:#000;left:2575.4px;"><span id="t329">-</span></div>
<div class="t" style="top:1160.46px;font-size:22.4px;color:#000;left:2744.4px;"><span id="t330">-</span></div>
<div class="t" style="top:1188.90px;font-size:22.4px;color:#000;left:140.8px;"><span id="t331">-</span></div>
<div class="t" style="top:1188.90px;font-size:22.4px;color:#000;letter-spacing:-0.344px;left:1069.83px;width:1200px;text-align:center;"><span id="t332">Yes</span></div>
<div class="t" style="top:1188.50px;font-size:22.4px;color:#000;left:1899.4px;"><span id="t333">-</span></div>
<div class="t" style="top:1188.50px;font-size:22.4px;color:#000;left:2068.4px;"><span id="t334">-</span></div>
<div class="t" style="top:1188.50px;font-size:22.4px;color:#000;left:2237.4px;"><span id="t335">-</span></div>
<div class="t" style="top:1188.50px;font-size:22.4px;color:#000;left:2406.4px;"><span id="t336">-</span></div>
<div class="t" style="top:1188.50px;font-size:22.4px;color:#000;left:2575.4px;"><span id="t337">-</span></div>
<div class="t" style="top:1188.50px;font-size:22.4px;color:#000;left:2744.4px;"><span id="t338">-</span></div>
<div style="left:137.5px;top:1212.4px;width:2722.5px;height:35.2px;background:#4ab1e7;"></div>
<div class="t" style="top:1216.20px;font-size:28px;color:#fff;font-weight:700;letter-spacing:1.337px;left:143px;-webkit-text-stroke:0.5px #fff;"><span id="t339">Total</span></div>
<div class="t" style="top:1219.54px;font-size:22.4px;color:#fff;font-weight:700;letter-spacing:1.386px;left:352.886px;width:1200px;text-align:right;-webkit-text-stroke:0.4px #fff;"><span id="t340">5,400,000</span></div>
<div class="t" style="top:1219.54px;font-size:22.4px;color:#fff;font-weight:700;letter-spacing:1.409px;left:728.909px;width:1200px;text-align:right;-webkit-text-stroke:0.4px #fff;"><span id="t341">829,167</span></div>
<div class="t" style="top:1219.54px;font-size:22.4px;color:#fff;font-weight:700;letter-spacing:1.409px;left:897.909px;width:1200px;text-align:right;-webkit-text-stroke:0.4px #fff;"><span id="t342">979,881</span></div>
<div class="t" style="top:1219.54px;font-size:22.4px;color:#fff;font-weight:700;letter-spacing:1.409px;left:1066.91px;width:1200px;text-align:right;-webkit-text-stroke:0.4px #fff;"><span id="t343">972,381</span></div>
<div class="t" style="top:1219.54px;font-size:22.4px;color:#fff;font-weight:700;letter-spacing:1.409px;left:1235.91px;width:1200px;text-align:right;-webkit-text-stroke:0.4px #fff;"><span id="t344">699,048</span></div>
<div class="t" style="top:1219.54px;font-size:22.4px;color:#fff;font-weight:700;letter-spacing:1.409px;left:1404.91px;width:1200px;text-align:right;-webkit-text-stroke:0.4px #fff;"><span id="t345">736,548</span></div>
<div class="t" style="top:1219.54px;font-size:22.4px;color:#fff;font-weight:700;letter-spacing:1.409px;left:1573.91px;width:1200px;text-align:right;-webkit-text-stroke:0.4px #fff;"><span id="t346">631,548</span></div>
<div class="t" style="top:1219.54px;font-size:22.4px;color:#fff;font-weight:700;left:2850.5px;"><span id="t347">1</span></div>
<div style="left:137.5px;top:1373.4px;width:2722.5px;height:27.9px;background:#4ab1e7;"></div>
<div class="t" style="top:1377.64px;font-size:22.4px;color:#fff;font-weight:700;letter-spacing:0.362px;left:142px;-webkit-text-stroke:0.4px #fff;"><span id="t348">Opening Net Book Value</span></div>
<div style="left:1566px;top:1401px;width:207px;height:1.3px;background:#4ab1e7;"></div>
<div class="t" style="top:1375.74px;font-size:22.4px;color:#fff;font-weight:700;left:1891.5px;-webkit-text-stroke:0.4px #fff;"><span id="t349">-</span></div>
<div class="t" style="top:1378.04px;font-size:22.4px;color:#fff;font-weight:700;letter-spacing:1.409px;left:897.909px;width:1200px;text-align:right;-webkit-text-stroke:0.4px #fff;"><span id="t350">822,257</span></div>
<div class="t" style="top:1378.04px;font-size:22.4px;color:#fff;font-weight:700;letter-spacing:1.386px;left:1066.89px;width:1200px;text-align:right;-webkit-text-stroke:0.4px #fff;"><span id="t351">1,787,063</span></div>
<div class="t" style="top:1378.04px;font-size:22.4px;color:#fff;font-weight:700;letter-spacing:1.386px;left:1235.89px;width:1200px;text-align:right;-webkit-text-stroke:0.4px #fff;"><span id="t352">2,736,265</span></div>
<div class="t" style="top:1378.04px;font-size:22.4px;color:#fff;font-weight:700;letter-spacing:1.386px;left:1404.89px;width:1200px;text-align:right;-webkit-text-stroke:0.4px #fff;"><span id="t353">3,406,309</span></div>
<div class="t" style="top:1378.04px;font-size:22.4px;color:#fff;font-weight:700;letter-spacing:1.386px;left:1573.89px;width:1200px;text-align:right;-webkit-text-stroke:0.4px #fff;"><span id="t354">4,107,714</span></div>
<div class="t" style="top:1378.04px;font-size:22.4px;color:#fff;font-weight:700;letter-spacing:1.620px;left:2829.5px;"><span id="t355">4,6</span></div>
<div class="t" style="top:1403.64px;font-size:22.4px;color:#000;letter-spacing:-0.196px;left:161.5px;"><span id="t356">Expenditure - Amortizable</span></div>
<div class="t" style="top:1405.34px;font-size:22.4px;color:#000;left:1730.4px;"><span id="t357">-</span></div>
<div class="t" style="top:1403.64px;font-size:22.4px;color:#000;letter-spacing:-0.394px;left:730.106px;width:1200px;text-align:right;"><span id="t358">829,167</span></div>
<div class="t" style="top:1403.64px;font-size:22.4px;color:#000;letter-spacing:-0.394px;left:899.106px;width:1200px;text-align:right;"><span id="t359">979,881</span></div>
<div class="t" style="top:1403.64px;font-size:22.4px;color:#000;letter-spacing:-0.394px;left:1068.11px;width:1200px;text-align:right;"><span id="t360">972,381</span></div>
<div class="t" style="top:1403.64px;font-size:22.4px;color:#000;letter-spacing:-0.394px;left:1237.11px;width:1200px;text-align:right;"><span id="t361">699,048</span></div>
<div class="t" style="top:1403.64px;font-size:22.4px;color:#000;letter-spacing:-0.394px;left:1406.11px;width:1200px;text-align:right;"><span id="t362">736,548</span></div>
<div class="t" style="top:1403.64px;font-size:22.4px;color:#000;letter-spacing:-0.394px;left:1575.11px;width:1200px;text-align:right;"><span id="t363">631,548</span></div>
<div class="t" style="top:1431.74px;font-size:22.4px;color:#000;letter-spacing:-0.136px;left:161.5px;"><span id="t364">Depreciation (Depreciation Period (Years) - 10)</span></div>
<div class="t" style="top:1431.74px;font-size:22.4px;color:#000;letter-spacing:-0.465px;left:730.035px;width:1200px;text-align:right;"><span id="t365">6,910</span></div>
<div class="t" style="top:1431.74px;font-size:22.4px;color:#000;letter-spacing:-0.422px;left:899.078px;width:1200px;text-align:right;"><span id="t366">15,075</span></div>
<div class="t" style="top:1431.74px;font-size:22.4px;color:#000;letter-spacing:-0.422px;left:1068.08px;width:1200px;text-align:right;"><span id="t367">23,179</span></div>
<div class="t" style="top:1431.74px;font-size:22.4px;color:#000;letter-spacing:-0.422px;left:1237.08px;width:1200px;text-align:right;"><span id="t368">29,004</span></div>
<div class="t" style="top:1431.74px;font-size:22.4px;color:#000;letter-spacing:-0.422px;left:1406.08px;width:1200px;text-align:right;"><span id="t369">35,142</span></div>
<div class="t" style="top:1431.74px;font-size:22.4px;color:#000;letter-spacing:-0.422px;left:1575.08px;width:1200px;text-align:right;"><span id="t370">40,405</span></div>
<div style="left:137.5px;top:1457.4px;width:2722.5px;height:28.3px;background:#4ab1e7;"></div>
<div class="t" style="top:1461.64px;font-size:22.4px;color:#fff;font-weight:700;letter-spacing:0.303px;left:142px;-webkit-text-stroke:0.4px #fff;"><span id="t371">Closing Net Book Value</span></div>
<div class="t" style="top:1459.74px;font-size:22.4px;color:#fff;font-weight:700;left:1722.5px;-webkit-text-stroke:0.4px #fff;"><span id="t372">-</span></div>
<div class="t" style="top:1462.04px;font-size:22.4px;color:#fff;font-weight:700;letter-spacing:1.409px;left:728.909px;width:1200px;text-align:right;-webkit-text-stroke:0.4px #fff;"><span id="t373">822,257</span></div>
<div class="t" style="top:1462.04px;font-size:22.4px;color:#fff;font-weight:700;letter-spacing:1.386px;left:897.886px;width:1200px;text-align:right;-webkit-text-stroke:0.4px #fff;"><span id="t374">1,787,063</span></div>
<div class="t" style="top:1462.04px;font-size:22.4px;color:#fff;font-weight:700;letter-spacing:1.386px;left:1066.89px;width:1200px;text-align:right;-webkit-text-stroke:0.4px #fff;"><span id="t375">2,736,265</span></div>
<div class="t" style="top:1462.04px;font-size:22.4px;color:#fff;font-weight:700;letter-spacing:1.386px;left:1235.89px;width:1200px;text-align:right;-webkit-text-stroke:0.4px #fff;"><span id="t376">3,406,309</span></div>
<div class="t" style="top:1462.04px;font-size:22.4px;color:#fff;font-weight:700;letter-spacing:1.386px;left:1404.89px;width:1200px;text-align:right;-webkit-text-stroke:0.4px #fff;"><span id="t377">4,107,714</span></div>
<div class="t" style="top:1462.04px;font-size:22.4px;color:#fff;font-weight:700;letter-spacing:1.386px;left:1573.89px;width:1200px;text-align:right;-webkit-text-stroke:0.4px #fff;"><span id="t378">4,698,857</span></div>
<div class="t" style="top:1462.04px;font-size:22.4px;color:#fff;font-weight:700;letter-spacing:1.620px;left:2829.5px;"><span id="t379">4,8</span></div>
<div style="left:137.5px;top:1527.2px;width:2722.5px;height:27.9px;background:#4ab1e7;"></div>
<div class="t" style="top:1531.44px;font-size:22.4px;color:#fff;font-weight:700;letter-spacing:0.362px;left:142px;-webkit-text-stroke:0.4px #fff;"><span id="t380">Opening Net Book Value</span></div>
<div style="left:1566px;top:1554.8px;width:207px;height:1.3px;background:#4ab1e7;"></div>
<div class="t" style="top:1529.54px;font-size:22.4px;color:#fff;font-weight:700;left:1891.5px;-webkit-text-stroke:0.4px #fff;"><span id="t381">-</span></div>
<div class="t" style="top:1529.54px;font-size:22.4px;color:#fff;font-weight:700;left:2060.5px;-webkit-text-stroke:0.4px #fff;"><span id="t382">-</span></div>
<div class="t" style="top:1529.54px;font-size:22.4px;color:#fff;font-weight:700;left:2229.5px;-webkit-text-stroke:0.4px #fff;"><span id="t383">-</span></div>
<div class="t" style="top:1529.54px;font-size:22.4px;color:#fff;font-weight:700;left:2398.5px;-webkit-text-stroke:0.4px #fff;"><span id="t384">-</span></div>
<div class="t" style="top:1529.54px;font-size:22.4px;color:#fff;font-weight:700;left:2567.5px;-webkit-text-stroke:0.4px #fff;"><span id="t385">-</span></div>
<div class="t" style="top:1529.54px;font-size:22.4px;color:#fff;font-weight:700;left:2736.5px;-webkit-text-stroke:0.4px #fff;"><span id="t386">-</span></div>
<div class="t" style="top:1557.44px;font-size:22.4px;color:#000;letter-spacing:-0.230px;left:161.5px;"><span id="t387">Expenditure - Non-Amortizable</span></div>
<div class="t" style="top:1559.14px;font-size:22.4px;color:#000;left:1899.4px;"><span id="t388">-</span></div>
<div class="t" style="top:1559.14px;font-size:22.4px;color:#000;left:2068.4px;"><span id="t389">-</span></div>
<div class="t" style="top:1559.14px;font-size:22.4px;color:#000;left:2237.4px;"><span id="t390">-</span></div>
<div class="t" style="top:1559.14px;font-size:22.4px;color:#000;left:2406.4px;"><span id="t391">-</span></div>
<div class="t" style="top:1559.14px;font-size:22.4px;color:#000;left:2575.4px;"><span id="t392">-</span></div>
<div class="t" style="top:1559.14px;font-size:22.4px;color:#000;left:2744.4px;"><span id="t393">-</span></div>
<div style="left:137.5px;top:1583.3px;width:2722.5px;height:28.6px;background:#4ab1e7;"></div>
<div class="t" style="top:1587.54px;font-size:22.4px;color:#fff;font-weight:700;letter-spacing:0.303px;left:142px;-webkit-text-stroke:0.4px #fff;"><span id="t394">Closing Net Book Value</span></div>
<div class="t" style="top:1585.64px;font-size:22.4px;color:#fff;font-weight:700;left:1891.5px;-webkit-text-stroke:0.4px #fff;"><span id="t395">-</span></div>
<div class="t" style="top:1585.64px;font-size:22.4px;color:#fff;font-weight:700;left:2060.5px;-webkit-text-stroke:0.4px #fff;"><span id="t396">-</span></div>
<div class="t" style="top:1585.64px;font-size:22.4px;color:#fff;font-weight:700;left:2229.5px;-webkit-text-stroke:0.4px #fff;"><span id="t397">-</span></div>
<div class="t" style="top:1585.64px;font-size:22.4px;color:#fff;font-weight:700;left:2398.5px;-webkit-text-stroke:0.4px #fff;"><span id="t398">-</span></div>
<div class="t" style="top:1585.64px;font-size:22.4px;color:#fff;font-weight:700;left:2567.5px;-webkit-text-stroke:0.4px #fff;"><span id="t399">-</span></div>
<div class="t" style="top:1585.64px;font-size:22.4px;color:#fff;font-weight:700;left:2736.5px;-webkit-text-stroke:0.4px #fff;"><span id="t400">-</span></div>
<div style="left:53px;top:514px;width:2807px;height:1.2px;background:#9c9c9c;"></div>
<div style="left:1773px;top:305px;width:1.2px;height:1365px;background:#9c9c9c;"></div>
<div style="left:2860px;top:278px;width:31px;height:1392px;background:#0a0a0a;"></div>
<div style="left:2864.5px;top:283px;width:24px;height:1388px;background:#161616;border-radius:12px;"></div>
<svg style="left:2868px;top:285px;" width="16" height="12" viewBox="0 0 16 12" fill="none"><path d="M8 1.5 L14.5 10.5 H1.5 Z" fill="#9d9d9d" stroke="#9d9d9d" stroke-width="1.5" stroke-linejoin="round"/></svg>
<div style="left:2869.8px;top:303.6px;width:12.4px;height:1310px;background:#9d9d9d;border-radius:6.2px;"></div>
<svg style="left:2868px;top:1653.3px;" width="16" height="12" viewBox="0 0 16 12" fill="none"><path d="M8 10.5 L14.5 1.5 H1.5 Z" fill="#9d9d9d" stroke="#9d9d9d" stroke-width="1.5" stroke-linejoin="round"/></svg>
<div style="left:820px;top:1668px;width:110px;height:10px;background:#fff;"></div>
<div style="left:11px;top:1670px;width:820.6px;height:48.5px;background:#0a0a0a;border-radius:0 4.5px 0 0;"></div>
<div style="left:919.2px;top:1670px;width:1971.8px;height:48.5px;background:#0a0a0a;border-radius:4.5px 0 0 0;"></div>
<div style="left:825px;top:1700px;width:100px;height:18.5px;background:#0a0a0a;"></div>
<div style="left:11px;top:1718.5px;width:2880px;height:32px;background:#151515;"></div>
<div style="left:11px;top:1718px;width:2880px;height:1px;background:#2c2c2c;"></div>
<svg style="left:44px;top:1684px;" width="14" height="18" viewBox="0 0 14 18" fill="none"><path d="M10.5 2 L3.5 9 L10.5 16" stroke="#7d7d7d" stroke-width="1.7" stroke-linecap="round" stroke-linejoin="round"/></svg>
<svg style="left:92px;top:1684px;" width="14" height="18" viewBox="0 0 14 18" fill="none"><path d="M3.5 2 L10.5 9 L3.5 16" stroke="#d4d4d4" stroke-width="1.7" stroke-linecap="round" stroke-linejoin="round"/></svg>
<div class="t" style="top:1685.22px;font-size:21px;color:#fff;letter-spacing:-0.245px;left:190.5px;"><span id="t401">Contents</span></div>
<div style="left:299.3px;top:1676.3px;width:127.7px;height:35.6px;background:#fff06a;border-radius:6px;"></div>
<div class="t" style="top:1685.22px;font-size:21px;color:#151515;letter-spacing:-0.382px;left:314px;"><span id="t402">Dashboard</span></div>
<div style="left:440.3px;top:1676.3px;width:105.7px;height:35.6px;background:#fff06a;border-radius:6px;"></div>
<div class="t" style="top:1685.22px;font-size:21px;color:#151515;letter-spacing:-0.880px;left:454.8px;"><span id="t403">Revenue</span></div>
<div style="left:559px;top:1676.3px;width:158px;height:35.6px;background:#fff06a;border-radius:6px;"></div>
<div class="t" style="top:1685.22px;font-size:21px;color:#151515;letter-spacing:-1.243px;left:572.4px;"><span id="t404">COGS &amp; OPEX</span></div>
<div style="left:730.5px;top:1676.3px;width:88.5px;height:35.6px;background:#fff06a;border-radius:6px;"></div>
<div class="t" style="top:1685.22px;font-size:21px;color:#151515;letter-spacing:-0.500px;left:743.9px;"><span id="t405">Payroll</span></div>
<div style="left:932px;top:1676.3px;width:113.2px;height:35.6px;background:#fff06a;border-radius:6px;"></div>
<div class="t" style="top:1685.22px;font-size:21px;color:#151515;letter-spacing:-0.379px;left:945.3px;"><span id="t406">CapTable</span></div>
<div style="left:1057.9px;top:1676.3px;width:90.1px;height:35.6px;background:#fff06a;border-radius:6px;"></div>
<div class="t" style="top:1685.22px;font-size:21px;color:#151515;letter-spacing:-0.282px;left:1071.3px;"><span id="t407">Capital</span></div>
<div style="left:1161.3px;top:1676.3px;width:41.8px;height:35.6px;background:#4ab0e7;border-radius:6px;"></div>
<div class="t" style="top:1685.22px;font-size:21px;color:#151515;letter-spacing:-2.222px;left:1175px;"><span id="t408">IS</span></div>
<div style="left:1216.1px;top:1676.3px;width:47.8px;height:35.6px;background:#4ab0e7;border-radius:6px;"></div>
<div class="t" style="top:1685.22px;font-size:21px;color:#151515;letter-spacing:-3.050px;left:1229.8px;"><span id="t409">CF</span></div>
<div style="left:1277.2px;top:1676.3px;width:47.7px;height:35.6px;background:#4ab0e7;border-radius:6px;"></div>
<div class="t" style="top:1685.22px;font-size:21px;color:#151515;letter-spacing:-3.308px;left:1290.5px;"><span id="t410">BS</span></div>
<div style="left:1337.9px;top:1676.3px;width:114.8px;height:35.6px;background:#4ab0e7;border-radius:6px;"></div>
<div class="t" style="top:1685.22px;font-size:21px;color:#151515;letter-spacing:-0.677px;left:1351.2px;"><span id="t411">Scenarios</span></div>
<div style="left:1465.8px;top:1676.3px;width:114.9px;height:35.6px;background:#4ab0e7;border-radius:6px;"></div>
<div class="t" style="top:1685.22px;font-size:21px;color:#151515;letter-spacing:0.120px;left:1479.4px;"><span id="t412">Valuation</span></div>
<div style="left:1594px;top:1676.3px;width:114.1px;height:35.6px;background:#4ab0e7;border-radius:6px;"></div>
<div class="t" style="top:1685.22px;font-size:21px;color:#151515;letter-spacing:-0.394px;left:1608.3px;"><span id="t413">Summary</span></div>
<div style="left:1721.2px;top:1676.3px;width:48px;height:35.6px;background:#4ab0e7;border-radius:6px;"></div>
<div class="t" style="top:1685.22px;font-size:21px;color:#151515;letter-spacing:-3.208px;left:1734.8px;"><span id="t414">BE</span></div>
<div style="left:1782.2px;top:1676.3px;width:71.7px;height:35.6px;background:#4ab0e7;border-radius:6px;"></div>
<div class="t" style="top:1685.22px;font-size:21px;color:#151515;letter-spacing:-1.725px;left:1795.9px;"><span id="t415">ROIC</span></div>
<div style="left:1867.3px;top:1676.3px;width:84.7px;height:35.6px;background:#4ab0e7;border-radius:6px;"></div>
<div class="t" style="top:1685.22px;font-size:21px;color:#151515;letter-spacing:-0.627px;left:1880.3px;"><span id="t416">Charts</span></div>
<div style="left:1965px;top:1676.3px;width:64px;height:35.6px;background:#4ab0e7;border-radius:6px;"></div>
<div class="t" style="top:1685.22px;font-size:21px;color:#151515;letter-spacing:-1.840px;left:1978.7px;"><span id="t417">KPIs</span></div>
<div style="left:2042.1px;top:1676.3px;width:29.6px;height:35.6px;background:#4ab0e7;border-radius:6px 0 0 6px;overflow:hidden;"></div>
<div style="left:2042.1px;top:1676.3px;width:29.6px;height:35.6px;overflow:hidden;"><div class="t" style="left:12.7px;top:8.9px;font-size:21px;color:#151515;">Sc</div></div>
<div style="left:291.8px;top:1680px;width:1.2px;height:27.5px;background:#454545;"></div>
<div style="left:432.9px;top:1680px;width:1.2px;height:27.5px;background:#454545;"></div>
<div style="left:552px;top:1680px;width:1.2px;height:27.5px;background:#454545;"></div>
<div style="left:723.2px;top:1680px;width:1.2px;height:27.5px;background:#454545;"></div>
<div style="left:825.4px;top:1680px;width:1.2px;height:27.5px;background:#454545;"></div>
<div style="left:925.2px;top:1680px;width:1.2px;height:27.5px;background:#454545;"></div>
<div style="left:1051.1px;top:1680px;width:1.2px;height:27.5px;background:#454545;"></div>
<div style="left:1154.2px;top:1680px;width:1.2px;height:27.5px;background:#454545;"></div>
<div style="left:1209px;top:1680px;width:1.2px;height:27.5px;background:#454545;"></div>
<div style="left:1270.1px;top:1680px;width:1.2px;height:27.5px;background:#454545;"></div>
<div style="left:1330.8px;top:1680px;width:1.2px;height:27.5px;background:#454545;"></div>
<div style="left:1458.7px;top:1680px;width:1.2px;height:27.5px;background:#454545;"></div>
<div style="left:1587px;top:1680px;width:1.2px;height:27.5px;background:#454545;"></div>
<div style="left:1714.1px;top:1680px;width:1.2px;height:27.5px;background:#454545;"></div>
<div style="left:1775.1px;top:1680px;width:1.2px;height:27.5px;background:#454545;"></div>
<div style="left:1860.1px;top:1680px;width:1.2px;height:27.5px;background:#454545;"></div>
<div style="left:1957.9px;top:1680px;width:1.2px;height:27.5px;background:#454545;"></div>
<div style="left:2035px;top:1680px;width:1.2px;height:27.5px;background:#454545;"></div>
<div style="left:831.6px;top:1669px;width:87.6px;height:43px;background:linear-gradient(#ffffff 0%, #ffffff 30%, #fffbdc 100%);border-radius:0 0 5px 5px;"></div>
<div class="t" style="top:1679.82px;font-size:21px;color:#1b1b1b;letter-spacing:-1.741px;left:844.3px;"><span id="t418">CAPEX</span></div>
<div style="left:844px;top:1704.8px;width:63px;height:3.1px;background:#1d8b40;"></div>
<div style="left:2087.6px;top:1690.8px;width:3.8px;height:3.8px;background:#e6e6e6;border-radius:50%;"></div>
<div style="left:2093.5px;top:1690.8px;width:3.8px;height:3.8px;background:#e6e6e6;border-radius:50%;"></div>
<div style="left:2099.4px;top:1690.8px;width:3.8px;height:3.8px;background:#e6e6e6;border-radius:50%;"></div>
<div style="left:2135px;top:1692.1px;width:16.6px;height:1.7px;background:#e6e6e6;"></div>
<div style="left:2142.5px;top:1684.6px;width:1.7px;height:16.6px;background:#e6e6e6;"></div>
<div style="left:2190.6px;top:1687px;width:3px;height:3px;background:#e6e6e6;"></div>
<div style="left:2190.6px;top:1692.9px;width:3px;height:3px;background:#e6e6e6;"></div>
<div style="left:2190.6px;top:1698.8px;width:3px;height:3px;background:#e6e6e6;"></div>
<div style="left:2216.2px;top:1679.5px;width:644.8px;height:27px;background:#151515;border-radius:13.5px;"></div>
<svg style="left:2223px;top:1685px;" width="13" height="16" viewBox="0 0 13 16" fill="none"><path d="M11 1.5 V14.5 L1.8 8 Z" fill="#9d9d9d" stroke="#9d9d9d" stroke-width="1.2" stroke-linejoin="round"/></svg>
<div style="left:2241.9px;top:1686.7px;width:55.3px;height:12.7px;background:#9d9d9d;border-radius:6.4px;"></div>
<svg style="left:2842px;top:1685px;" width="13" height="16" viewBox="0 0 13 16" fill="none"><path d="M2 1.5 V14.5 L11.2 8 Z" fill="#9d9d9d" stroke="#9d9d9d" stroke-width="1.2" stroke-linejoin="round"/></svg>
<div class="t" style="top:1727.06px;font-size:16px;color:#f0f0f0;letter-spacing:-0.790px;left:27.3px;"><span id="t419">Ready</span></div>
<svg style="left:98px;top:1725px;" width="25" height="22" viewBox="0 0 25 22" fill="none"><path d="M1.5 19 V1.5 H22 V8.5 M1.5 5.5 H22 M5 9.5 H11 M5 13 H9.5 M5 16.5 H9.5 M1.5 19 H10.5" stroke="#e6e6e6" stroke-width="1.5"/><circle cx="16.5" cy="14.5" r="5.6" stroke="#e6e6e6" stroke-width="1.5"/><circle cx="16.5" cy="14.5" r="2.6" fill="#e6e6e6"/></svg>
<svg style="left:145px;top:1723px;" width="25" height="25" viewBox="0 0 25 25" fill="none"><circle cx="10.5" cy="3.8" r="2.4" stroke="#e6e6e6" stroke-width="1.4"/><path d="M2 8.5 C5 6.5 7 9 10.5 9 C14 9 16 6.5 19 8.5 M10.5 9 V14 M10.5 14 L5.5 22.5 M10.5 14 L13 17.5" stroke="#e6e6e6" stroke-width="1.5" stroke-linecap="round" stroke-linejoin="round"/><path d="M14.5 16 L22.5 24 M22.5 16 L14.5 24" stroke="#e6e6e6" stroke-width="1.5" stroke-linecap="round"/></svg>
<div class="t" style="top:1727.06px;font-size:16px;color:#fff;font-weight:700;letter-spacing:-0.138px;left:173.3px;"><span id="t420">Accessibility: Investigate</span></div>
<div style="left:2445px;top:1719px;width:60.2px;height:31.5px;background:#262626;"></div>
<svg style="left:2463px;top:1724px;" width="22" height="21" viewBox="0 0 22 21" fill="none"><rect x="1.2" y="1.2" width="19.6" height="18.6" stroke="#f0f0f0" stroke-width="1.6"/><path d="M7.7 1 V20 M14.3 1 V20 M1 7.5 H21 M1 13.7 H21" stroke="#f0f0f0" stroke-width="1.6"/></svg>
<svg style="left:2523px;top:1724px;" width="24" height="21" viewBox="0 0 24 21" fill="none"><rect x="1.2" y="1.2" width="21.6" height="18.6" stroke="#f0f0f0" stroke-width="1.6"/><rect x="6.5" y="5" width="11" height="11.5" stroke="#f0f0f0" stroke-width="1.4"/><path d="M9 8.5 H15 M9 10.8 H15 M9 13.2 H15" stroke="#f0f0f0" stroke-width="1.2"/></svg>
<svg style="left:2583px;top:1724px;" width="24" height="21" viewBox="0 0 24 21" fill="none"><rect x="1.2" y="1.2" width="21.6" height="18.6" stroke="#f0f0f0" stroke-width="1.6"/><path d="M1 11.5 H23 M8 1 V11.5 M15 1 V11.5" stroke="#f0f0f0" stroke-width="1.6"/></svg>
<div style="left:2633px;top:1733.8px;width:11.3px;height:1.5px;background:#d8d8d8;"></div>
<div style="left:2653.3px;top:1733.8px;width:147.2px;height:1.5px;background:#a8a8a8;"></div>
<div style="left:2726.2px;top:1731px;width:1.6px;height:8px;background:#a8a8a8;"></div>
<div style="left:2732.7px;top:1726px;width:8.2px;height:17px;background:#c2c2c2;"></div>
<div style="left:2808.9px;top:1733.8px;width:11.5px;height:1.5px;background:#d8d8d8;"></div>
<div style="left:2813.9px;top:1728.8px;width:1.5px;height:11.5px;background:#d8d8d8;"></div>
<div class="t" style="top:1726.86px;font-size:16px;color:#f0f0f0;letter-spacing:-0.630px;left:2840.5px;"><span id="t421">140%</span></div>
</div></body></html>
